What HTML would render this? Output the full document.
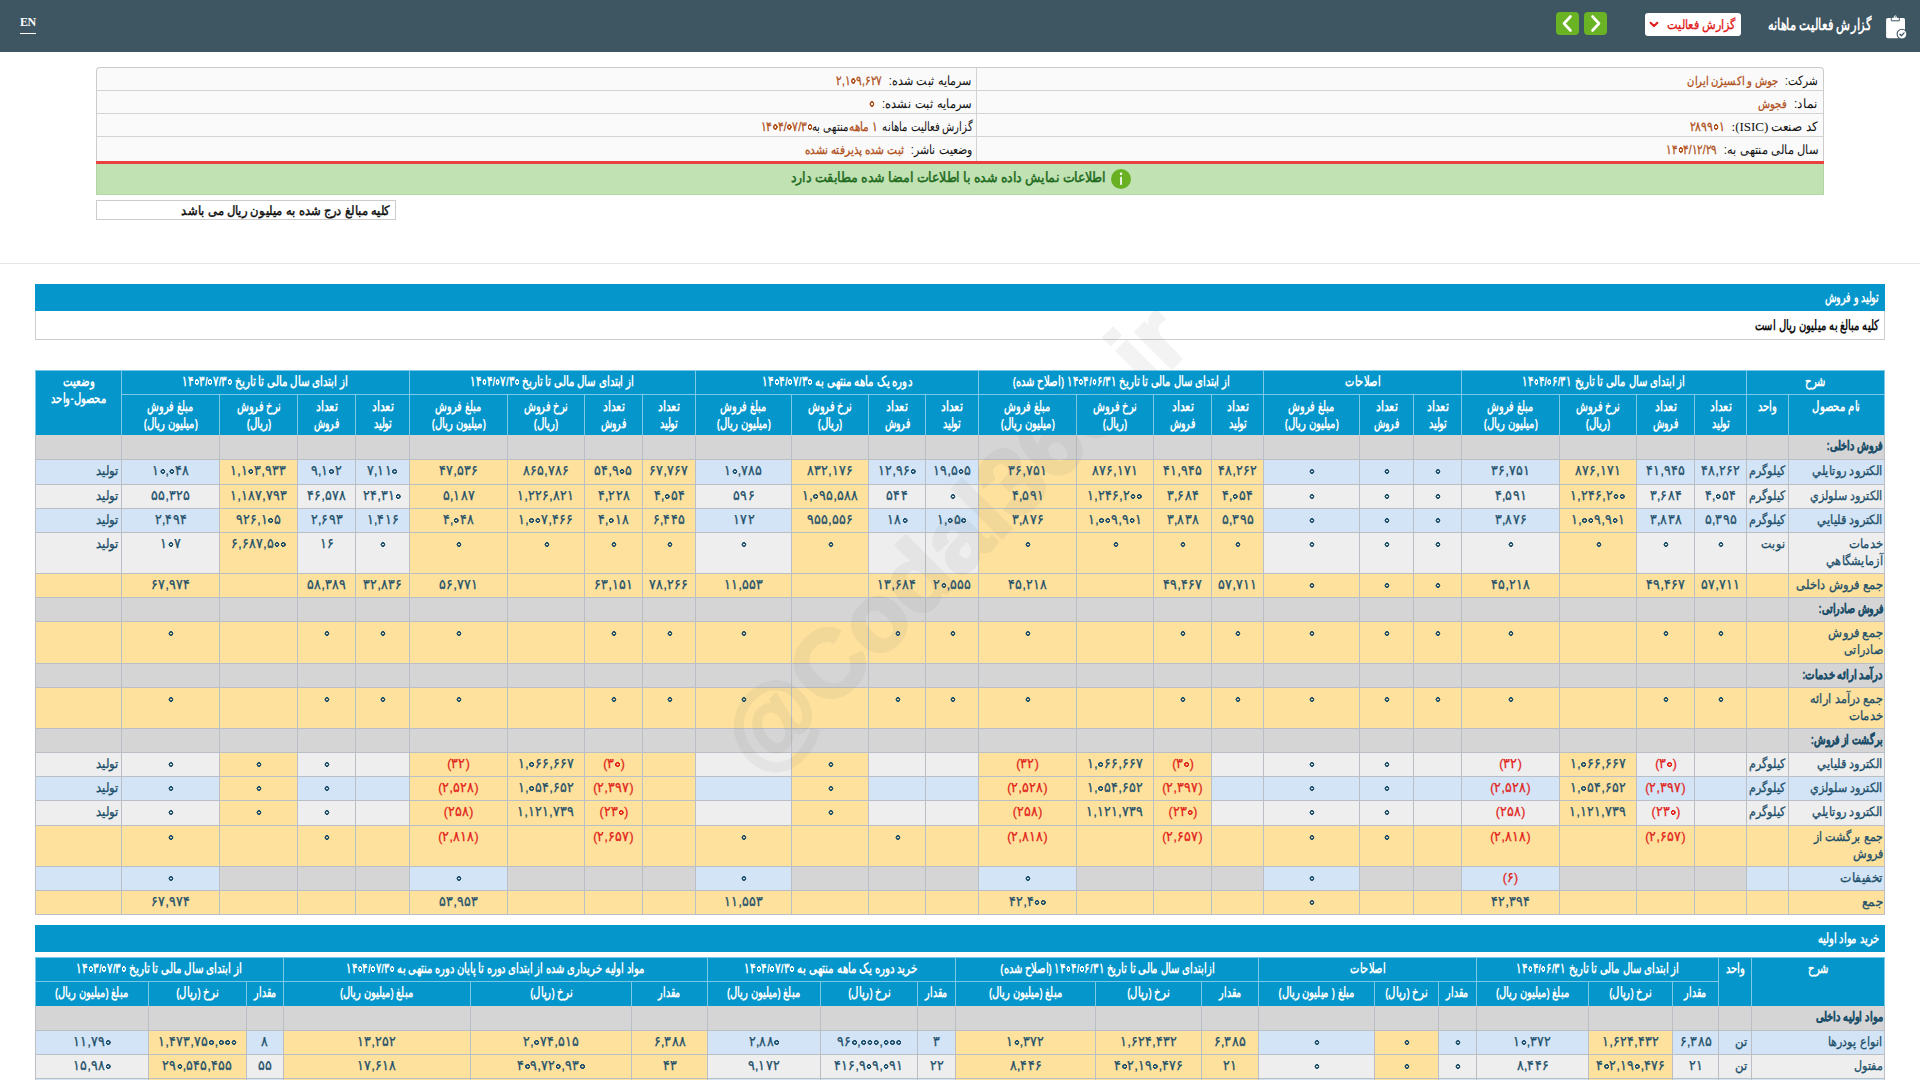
<!DOCTYPE html>
<html lang="fa"><head><meta charset="utf-8"><title>گزارش فعالیت ماهانه</title>
<style>
html,body{margin:0;padding:0;}
body{width:1920px;height:1080px;overflow:hidden;background:#fff;position:relative;font-family:"Liberation Sans",sans-serif;direction:rtl;font-size:12px;}
div{position:absolute;box-sizing:border-box;}
.c{overflow:hidden;white-space:nowrap;line-height:17px;}
.t{display:inline-block;white-space:nowrap;vertical-align:top;}
.s{font-family:"Liberation Serif",serif;}
.n{direction:ltr;}
.d{-webkit-text-stroke:0.300px;}
.z{display:inline-block;width:6px;height:5.100px;background:radial-gradient(ellipse closest-side,transparent 30%,currentColor 46%,currentColor 86%,transparent 100%);margin:0 .5px;position:relative;top:-1px;}
b,.b{font-weight:bold;}
</style></head><body>

<div style="left:0px;top:0px;width:1920px;height:52px;background:#3e5562;"></div>
<div class="s" style="left:20px;top:14px;width:20px;height:16px;color:#fff;font-size:12px;font-weight:bold;letter-spacing:-0.400px;line-height:16px;direction:ltr;text-align:left;">EN</div>
<div style="left:20px;top:33px;width:16px;height:1px;background:#fff;"></div>
<svg style="position:absolute;left:1884px;top:14px" width="26" height="28" viewBox="0 0 26 28">
<rect x="2.100" y="3.900" width="18.900" height="20.300" rx="1.700" fill="#fff"/>
<path d="M7.300 6.800V4.300c0-.5.400-.9.900-.9h1.200c.2-1.400 1-2.400 1.900-2.400s1.700 1 1.900 2.400h1.200c.5 0 .9.400.9.900v2.500z" fill="#fff" stroke="#3e5562" stroke-width="1"/>
<path d="M11.300 1.900l.9 1.400h-1.800z" fill="#3e5562"/>
<circle cx="18" cy="20.100" r="4.900" fill="#fff" stroke="#3e5562" stroke-width="1.100"/>
<path d="M15.900 20.300l1.500 1.500 2.700-2.900" fill="none" stroke="#3e5562" stroke-width="1.300" stroke-linecap="round" stroke-linejoin="round"/>
</svg>
<div style="left:1700px;top:13px;width:172px;height:24px;color:#fff;line-height:24px;text-align:right;white-space:nowrap"><span class="t" style="font-size:15.5px;font-weight:bold;transform:scaleX(0.719);transform-origin:right;margin-left:-47.0px;">گزارش فعالیت ماهانه</span></div>
<div style="left:1645px;top:13px;width:96px;height:23px;background:#fff;border-radius:3px;"></div>
<div style="left:1660px;top:13.500px;width:76px;height:21px;color:#e01818;line-height:21px;text-align:right;white-space:nowrap;-webkit-text-stroke:0.300px"><span class="t" style="font-size:13px;transform:scaleX(0.863);transform-origin:right;margin-left:-11.0px;">گزارش فعالیت</span></div>
<svg style="position:absolute;left:1649px;top:21px" width="10" height="8" viewBox="0 0 10 8"><path d="M1.600 1.700L5 5 8.400 1.700" fill="none" stroke="#e01818" stroke-width="2" stroke-linecap="round" stroke-linejoin="round"/></svg>
<div style="left:1556px;top:12px;width:23px;height:23px;background:#69b325;border-radius:4px;"></div>
<div style="left:1584px;top:12px;width:23px;height:23px;background:#69b325;border-radius:4px;"></div>
<svg style="position:absolute;left:1556px;top:12px" width="23" height="23" viewBox="0 0 23 23"><path d="M14.500 4.500L8 11.500l6.500 7" fill="none" stroke="#fff" stroke-width="2.600" stroke-linecap="round" stroke-linejoin="round"/></svg>
<svg style="position:absolute;left:1584px;top:12px" width="23" height="23" viewBox="0 0 23 23"><path d="M8.500 4.500l6.500 7-6.500 7" fill="none" stroke="#fff" stroke-width="2.600" stroke-linecap="round" stroke-linejoin="round"/></svg>
<div style="left:96px;top:67px;width:1728px;height:94px;background:#fafafa;border:1px solid #ccc;border-bottom:none;border-radius:4px 4px 0 0;"></div>
<div style="left:97px;top:90px;width:1726px;height:1px;background:#d4d4d4;"></div>
<div style="left:97px;top:113px;width:1726px;height:1px;background:#d4d4d4;"></div>
<div style="left:97px;top:136px;width:1726px;height:1px;background:#d4d4d4;"></div>
<div style="left:976px;top:68px;width:1px;height:93px;background:#d4d4d4;"></div>
<div style="left:1218px;top:69.5px;width:600px;height:22px;line-height:22px;font-size:13px;text-align:right;white-space:nowrap"><span style="color:#111"><span class="t" style="font-size:13px;transform:scaleX(0.805);transform-origin:right;margin-left:-8.0px;">شرکت:</span></span><span class="t" style="width:7px"></span><span style="color:#b0501a;-webkit-text-stroke:0.300px"><span class="t" style="font-size:12px;transform:scaleX(0.833);transform-origin:right;margin-left:-18.0px;">جوش و اکسیژن ایران</span></span></div>
<div style="left:1218px;top:92.5px;width:600px;height:22px;line-height:22px;font-size:13px;text-align:right;white-space:nowrap"><span style="color:#111"><span class="t" style="font-size:13px;transform:scaleX(0.923);transform-origin:right;margin-left:-2.0px;">نماد:</span></span><span class="t" style="width:7px"></span><span style="color:#b0501a;-webkit-text-stroke:0.300px"><span class="t" style="font-size:12px;transform:scaleX(0.829);transform-origin:right;margin-left:-6.0px;">فجوش</span></span></div>
<div style="left:1218px;top:115.5px;width:600px;height:22px;line-height:22px;font-size:13px;text-align:right;white-space:nowrap"><span style="color:#111"><span class="t" style="font-size:13px;transform:scaleX(0.922);transform-origin:right;margin-left:-4.0px;">کد صنعت</span><span class="t s" style="font-size:13px;direction:ltr;margin-right:3px">:(ISIC)</span></span><span class="t" style="width:7px"></span><span style="color:#b0501a;-webkit-text-stroke:0.300px"><span class="t n" style="font-size:13px;transform:scaleX(0.833);margin:0 -3.5px;">۲۸۹۹<i class="z"></i>۱</span></span></div>
<div style="left:1218px;top:138.5px;width:600px;height:22px;line-height:22px;font-size:13px;text-align:right;white-space:nowrap"><span style="color:#111"><span class="t" style="font-size:13px;transform:scaleX(0.881);transform-origin:right;margin-left:-13.0px;">سال مالی منتهی به:</span></span><span class="t" style="width:7px"></span><span style="color:#b0501a;-webkit-text-stroke:0.300px"><span class="t n" style="font-size:13px;transform:scaleX(0.797);margin:0 -6.5px;">۱۴<i class="z"></i>۴/۱۲/۲۹</span></span></div>
<div style="left:372px;top:69.5px;width:600px;height:22px;line-height:22px;font-size:13px;text-align:right;white-space:nowrap"><span style="color:#111"><span class="t" style="font-size:13px;transform:scaleX(0.857);transform-origin:right;margin-left:-14.0px;">سرمایه ثبت شده:</span></span><span class="t" style="width:7px"></span><span style="color:#b0501a;-webkit-text-stroke:0.300px"><span class="t n" style="font-size:13px;transform:scaleX(0.807);margin:0 -5.5px;">۲,۱<i class="z"></i>۹,۶۲۷</span></span></div>
<div style="left:372px;top:92.5px;width:600px;height:22px;line-height:22px;font-size:13px;text-align:right;white-space:nowrap"><span style="color:#111"><span class="t" style="font-size:13px;transform:scaleX(0.883);transform-origin:right;margin-left:-12.0px;">سرمایه ثبت نشده:</span></span><span class="t" style="width:7px"></span><span style="color:#b0501a;-webkit-text-stroke:0.300px"><span class="t n" style="font-size:13px;transform:scaleX(0.900);margin:0 -0.3px;"><i class="z"></i></span></span></div>
<div style="left:372px;top:115.5px;width:600px;height:22px;line-height:22px;font-size:13px;text-align:right;white-space:nowrap"><span style="color:#111"><span class="t" style="font-size:13px;transform:scaleX(0.774);transform-origin:right;margin-left:-26.5px;">گزارش فعالیت ماهانه</span></span><span class="t" style="width:5px"></span><span style="color:#b0501a;-webkit-text-stroke:0.300px"><span class="t" style="font-size:12.5px;transform:scaleX(0.806);transform-origin:right;margin-left:-7.0px;">۱ ماهه</span></span><span style="color:#111"><span class="t" style="font-size:13px;transform:scaleX(0.787);transform-origin:right;margin-left:-10.0px;">منتهی به</span></span><span style="color:#b0501a;-webkit-text-stroke:0.300px"><span class="t n" style="font-size:13px;transform:scaleX(0.823);margin:0 -5.6px;">۱۴<i class="z"></i>۴/<i class="z"></i>۷/۳<i class="z"></i></span></span></div>
<div style="left:372px;top:138.5px;width:600px;height:22px;line-height:22px;font-size:13px;text-align:right;white-space:nowrap"><span style="color:#111"><span class="t" style="font-size:13px;transform:scaleX(0.838);transform-origin:right;margin-left:-12.0px;">وضعیت ناشر:</span></span><span class="t" style="width:7px"></span><span style="color:#b0501a;-webkit-text-stroke:0.300px"><span class="t" style="font-size:12px;transform:scaleX(0.883);transform-origin:right;margin-left:-13.0px;">ثبت شده پذیرفته نشده</span></span></div>
<div style="left:96px;top:161px;width:1728px;height:3px;background:#e8413f;"></div>
<div style="left:96px;top:164px;width:1728px;height:31px;background:#c1e2b3;border:1px solid #b3d6a4;border-top:none;"></div>
<svg style="position:absolute;left:1110px;top:168px" width="22" height="22" viewBox="0 0 22 22"><circle cx="11" cy="11" r="10" fill="#6ab023"/><rect x="10.200" y="8.800" width="1.700" height="8" fill="#fff"/><circle cx="11.050" cy="5.800" r="1.200" fill="#fff"/></svg>
<div style="left:700px;top:167px;width:406px;height:22px;line-height:22px;color:#1e6b1e;-webkit-text-stroke:0.500px;text-align:right;white-space:nowrap"><span class="t" style="font-size:13.5px;transform:scaleX(0.901);transform-origin:right;margin-left:-35.0px;">اطلاعات نمایش داده شده با اطلاعات امضا شده مطابقت دارد</span></div>
<div style="left:96px;top:200px;width:300px;height:20px;background:#fff;border:1px solid #ccc;"></div>
<div style="left:100px;top:202px;width:290px;height:18px;line-height:18px;color:#111;-webkit-text-stroke:0.450px;text-align:right;white-space:nowrap"><span class="t" style="font-size:12.5px;transform:scaleX(0.891);transform-origin:right;margin-left:-26.0px;">کلیه مبالغ درج شده به میلیون ریال می باشد</span></div>
<div style="left:0px;top:263px;width:1920px;height:1px;background:#e6e6e6;"></div>
<div style="left:35px;top:284px;width:1850px;height:27px;background:#0597cc;z-index:2;"></div>
<div style="left:500px;top:286px;width:1379px;height:22px;line-height:22px;z-index:3;font-weight:bold;color:#fff;text-align:right;white-space:nowrap"><span class="t" style="font-size:14px;font-weight:bold;transform:scaleX(0.677);transform-origin:right;margin-left:-31.0px;">تولید و فروش</span></div>
<div style="left:35px;top:311px;width:1850px;height:29px;background:#fff;border:1px solid #ccc;border-top:none;"></div>
<div style="left:500px;top:314px;width:1379px;height:22px;line-height:22px;font-size:12px;font-weight:bold;color:#111;text-align:right;white-space:nowrap"><span class="t" style="font-size:14px;font-weight:bold;transform:scaleX(0.712);transform-origin:right;margin-left:-60.0px;">کلیه مبالغ به میلیون ریال است</span></div>
<div style="left:35px;top:370px;width:1850px;height:65px;background:#7ac8e6;"></div>
<div class="c" style="left:1747px;top:371px;width:137px;height:23px;background:#0597cc;color:#fff;text-align:center;font-weight:bold;padding-top:1.5px;line-height:17.300px;z-index:2;"><span class="t" style="font-size:13.5px;font-weight:bold;transform:scaleX(0.712);margin:0 -4.7px;">شرح</span></div>
<div class="c" style="left:1789px;top:395px;width:95px;height:40px;background:#0597cc;color:#fff;text-align:center;font-weight:bold;padding-top:2.5px;line-height:17.300px;z-index:2;"><span class="t" style="font-size:13.5px;font-weight:bold;transform:scaleX(0.718);margin:0 -11.0px;">نام محصول</span></div>
<div class="c" style="left:1747px;top:395px;width:41px;height:40px;background:#0597cc;color:#fff;text-align:center;font-weight:bold;padding-top:2.5px;line-height:17.300px;z-index:2;"><span class="t" style="font-size:13.5px;font-weight:bold;transform:scaleX(0.719);margin:0 -4.5px;">واحد</span></div>
<div class="c" style="left:1462px;top:371px;width:284px;height:23px;background:#0597cc;color:#fff;text-align:center;font-weight:bold;padding-top:1.5px;line-height:17.300px;z-index:2;"><span class="t" style="font-size:13.5px;font-weight:bold;transform:scaleX(0.718);margin:0 -37.5px;">از ابتدای سال مالی تا تاریخ <span class="t n">۱۴<i class="z"></i>۴/<i class="z"></i>۶/۳۱</span></span></div>
<div class="c" style="left:1695px;top:395px;width:51px;height:40px;background:#0597cc;color:#fff;text-align:center;font-weight:bold;padding-top:2.5px;line-height:17.300px;z-index:2;"><span class="t" style="font-size:13.5px;font-weight:bold;transform:scaleX(0.773);margin:0 -3.8px;">تعداد</span><br><span class="t" style="font-size:13.5px;font-weight:bold;transform:scaleX(0.697);margin:0 -5.0px;">تولید</span></div>
<div class="c" style="left:1637px;top:395px;width:57px;height:40px;background:#0597cc;color:#fff;text-align:center;font-weight:bold;padding-top:2.5px;line-height:17.300px;z-index:2;"><span class="t" style="font-size:13.5px;font-weight:bold;transform:scaleX(0.773);margin:0 -3.8px;">تعداد</span><br><span class="t" style="font-size:13.5px;font-weight:bold;transform:scaleX(0.663);margin:0 -7.8px;">فروش</span></div>
<div class="c" style="left:1560px;top:395px;width:76px;height:40px;background:#0597cc;color:#fff;text-align:center;font-weight:bold;padding-top:2.5px;line-height:17.300px;z-index:2;"><span class="t" style="font-size:13.5px;font-weight:bold;transform:scaleX(0.696);margin:0 -11.2px;">نرخ فروش</span><br><span class="t" style="font-size:13.5px;font-weight:bold;transform:scaleX(0.725);margin:0 -5.5px;">(ریال)</span></div>
<div class="c" style="left:1462px;top:395px;width:97px;height:40px;background:#0597cc;color:#fff;text-align:center;font-weight:bold;padding-top:2.5px;line-height:17.300px;z-index:2;"><span class="t" style="font-size:13.5px;font-weight:bold;transform:scaleX(0.691);margin:0 -12.5px;">مبلغ فروش</span><br><span class="t" style="font-size:13.5px;font-weight:bold;transform:scaleX(0.717);margin:0 -13.0px;">(میلیون ریال)</span></div>
<div class="c" style="left:1264px;top:371px;width:197px;height:23px;background:#0597cc;color:#fff;text-align:center;font-weight:bold;padding-top:1.5px;line-height:17.300px;z-index:2;"><span class="t" style="font-size:13.5px;font-weight:bold;transform:scaleX(0.703);margin:0 -8.8px;">اصلاحات</span></div>
<div class="c" style="left:1414px;top:395px;width:47px;height:40px;background:#0597cc;color:#fff;text-align:center;font-weight:bold;padding-top:2.5px;line-height:17.300px;z-index:2;"><span class="t" style="font-size:13.5px;font-weight:bold;transform:scaleX(0.773);margin:0 -3.8px;">تعداد</span><br><span class="t" style="font-size:13.5px;font-weight:bold;transform:scaleX(0.697);margin:0 -5.0px;">تولید</span></div>
<div class="c" style="left:1360px;top:395px;width:53px;height:40px;background:#0597cc;color:#fff;text-align:center;font-weight:bold;padding-top:2.5px;line-height:17.300px;z-index:2;"><span class="t" style="font-size:13.5px;font-weight:bold;transform:scaleX(0.773);margin:0 -3.8px;">تعداد</span><br><span class="t" style="font-size:13.5px;font-weight:bold;transform:scaleX(0.663);margin:0 -7.8px;">فروش</span></div>
<div class="c" style="left:1264px;top:395px;width:95px;height:40px;background:#0597cc;color:#fff;text-align:center;font-weight:bold;padding-top:2.5px;line-height:17.300px;z-index:2;"><span class="t" style="font-size:13.5px;font-weight:bold;transform:scaleX(0.691);margin:0 -12.5px;">مبلغ فروش</span><br><span class="t" style="font-size:13.5px;font-weight:bold;transform:scaleX(0.717);margin:0 -13.0px;">(میلیون ریال)</span></div>
<div class="c" style="left:979px;top:371px;width:284px;height:23px;background:#0597cc;color:#fff;text-align:center;font-weight:bold;padding-top:1.5px;line-height:17.300px;z-index:2;"><span class="t" style="font-size:13.5px;font-weight:bold;transform:scaleX(0.718);margin:0 -50.0px;">از ابتدای سال مالی تا تاریخ <span class="t n">۱۴<i class="z"></i>۴/<i class="z"></i>۶/۳۱</span> (اصلاح شده)</span></div>
<div class="c" style="left:1212px;top:395px;width:51px;height:40px;background:#0597cc;color:#fff;text-align:center;font-weight:bold;padding-top:2.5px;line-height:17.300px;z-index:2;"><span class="t" style="font-size:13.5px;font-weight:bold;transform:scaleX(0.773);margin:0 -3.8px;">تعداد</span><br><span class="t" style="font-size:13.5px;font-weight:bold;transform:scaleX(0.697);margin:0 -5.0px;">تولید</span></div>
<div class="c" style="left:1154px;top:395px;width:57px;height:40px;background:#0597cc;color:#fff;text-align:center;font-weight:bold;padding-top:2.5px;line-height:17.300px;z-index:2;"><span class="t" style="font-size:13.5px;font-weight:bold;transform:scaleX(0.773);margin:0 -3.8px;">تعداد</span><br><span class="t" style="font-size:13.5px;font-weight:bold;transform:scaleX(0.663);margin:0 -7.8px;">فروش</span></div>
<div class="c" style="left:1077px;top:395px;width:76px;height:40px;background:#0597cc;color:#fff;text-align:center;font-weight:bold;padding-top:2.5px;line-height:17.300px;z-index:2;"><span class="t" style="font-size:13.5px;font-weight:bold;transform:scaleX(0.696);margin:0 -11.2px;">نرخ فروش</span><br><span class="t" style="font-size:13.5px;font-weight:bold;transform:scaleX(0.725);margin:0 -5.5px;">(ریال)</span></div>
<div class="c" style="left:979px;top:395px;width:97px;height:40px;background:#0597cc;color:#fff;text-align:center;font-weight:bold;padding-top:2.5px;line-height:17.300px;z-index:2;"><span class="t" style="font-size:13.5px;font-weight:bold;transform:scaleX(0.691);margin:0 -12.5px;">مبلغ فروش</span><br><span class="t" style="font-size:13.5px;font-weight:bold;transform:scaleX(0.717);margin:0 -13.0px;">(میلیون ریال)</span></div>
<div class="c" style="left:696px;top:371px;width:282px;height:23px;background:#0597cc;color:#fff;text-align:center;font-weight:bold;padding-top:1.5px;line-height:17.300px;z-index:2;"><span class="t" style="font-size:13.5px;font-weight:bold;transform:scaleX(0.733);margin:0 -32.0px;">دوره یک ماهه منتهی به <span class="t n">۱۴<i class="z"></i>۴/<i class="z"></i>۷/۳<i class="z"></i></span></span></div>
<div class="c" style="left:926px;top:395px;width:52px;height:40px;background:#0597cc;color:#fff;text-align:center;font-weight:bold;padding-top:2.5px;line-height:17.300px;z-index:2;"><span class="t" style="font-size:13.5px;font-weight:bold;transform:scaleX(0.773);margin:0 -3.8px;">تعداد</span><br><span class="t" style="font-size:13.5px;font-weight:bold;transform:scaleX(0.697);margin:0 -5.0px;">تولید</span></div>
<div class="c" style="left:869px;top:395px;width:56px;height:40px;background:#0597cc;color:#fff;text-align:center;font-weight:bold;padding-top:2.5px;line-height:17.300px;z-index:2;"><span class="t" style="font-size:13.5px;font-weight:bold;transform:scaleX(0.773);margin:0 -3.8px;">تعداد</span><br><span class="t" style="font-size:13.5px;font-weight:bold;transform:scaleX(0.663);margin:0 -7.8px;">فروش</span></div>
<div class="c" style="left:792px;top:395px;width:76px;height:40px;background:#0597cc;color:#fff;text-align:center;font-weight:bold;padding-top:2.5px;line-height:17.300px;z-index:2;"><span class="t" style="font-size:13.5px;font-weight:bold;transform:scaleX(0.696);margin:0 -11.2px;">نرخ فروش</span><br><span class="t" style="font-size:13.5px;font-weight:bold;transform:scaleX(0.725);margin:0 -5.5px;">(ریال)</span></div>
<div class="c" style="left:696px;top:395px;width:95px;height:40px;background:#0597cc;color:#fff;text-align:center;font-weight:bold;padding-top:2.5px;line-height:17.300px;z-index:2;"><span class="t" style="font-size:13.5px;font-weight:bold;transform:scaleX(0.691);margin:0 -12.5px;">مبلغ فروش</span><br><span class="t" style="font-size:13.5px;font-weight:bold;transform:scaleX(0.717);margin:0 -13.0px;">(میلیون ریال)</span></div>
<div class="c" style="left:410px;top:371px;width:285px;height:23px;background:#0597cc;color:#fff;text-align:center;font-weight:bold;padding-top:1.5px;line-height:17.300px;z-index:2;"><span class="t" style="font-size:13.5px;font-weight:bold;transform:scaleX(0.726);margin:0 -36.5px;">از ابتدای سال مالی تا تاریخ <span class="t n">۱۴<i class="z"></i>۴/<i class="z"></i>۷/۳<i class="z"></i></span></span></div>
<div class="c" style="left:643px;top:395px;width:52px;height:40px;background:#0597cc;color:#fff;text-align:center;font-weight:bold;padding-top:2.5px;line-height:17.300px;z-index:2;"><span class="t" style="font-size:13.5px;font-weight:bold;transform:scaleX(0.773);margin:0 -3.8px;">تعداد</span><br><span class="t" style="font-size:13.5px;font-weight:bold;transform:scaleX(0.697);margin:0 -5.0px;">تولید</span></div>
<div class="c" style="left:585px;top:395px;width:57px;height:40px;background:#0597cc;color:#fff;text-align:center;font-weight:bold;padding-top:2.5px;line-height:17.300px;z-index:2;"><span class="t" style="font-size:13.5px;font-weight:bold;transform:scaleX(0.773);margin:0 -3.8px;">تعداد</span><br><span class="t" style="font-size:13.5px;font-weight:bold;transform:scaleX(0.663);margin:0 -7.8px;">فروش</span></div>
<div class="c" style="left:508px;top:395px;width:76px;height:40px;background:#0597cc;color:#fff;text-align:center;font-weight:bold;padding-top:2.5px;line-height:17.300px;z-index:2;"><span class="t" style="font-size:13.5px;font-weight:bold;transform:scaleX(0.696);margin:0 -11.2px;">نرخ فروش</span><br><span class="t" style="font-size:13.5px;font-weight:bold;transform:scaleX(0.725);margin:0 -5.5px;">(ریال)</span></div>
<div class="c" style="left:410px;top:395px;width:97px;height:40px;background:#0597cc;color:#fff;text-align:center;font-weight:bold;padding-top:2.5px;line-height:17.300px;z-index:2;"><span class="t" style="font-size:13.5px;font-weight:bold;transform:scaleX(0.691);margin:0 -12.5px;">مبلغ فروش</span><br><span class="t" style="font-size:13.5px;font-weight:bold;transform:scaleX(0.717);margin:0 -13.0px;">(میلیون ریال)</span></div>
<div class="c" style="left:122px;top:371px;width:287px;height:23px;background:#0597cc;color:#fff;text-align:center;font-weight:bold;padding-top:1.5px;line-height:17.300px;z-index:2;"><span class="t" style="font-size:13.5px;font-weight:bold;transform:scaleX(0.733);margin:0 -35.5px;">از ابتدای سال مالی تا تاریخ <span class="t n">۱۴<i class="z"></i>۳/<i class="z"></i>۷/۳<i class="z"></i></span></span></div>
<div class="c" style="left:356px;top:395px;width:53px;height:40px;background:#0597cc;color:#fff;text-align:center;font-weight:bold;padding-top:2.5px;line-height:17.300px;z-index:2;"><span class="t" style="font-size:13.5px;font-weight:bold;transform:scaleX(0.773);margin:0 -3.8px;">تعداد</span><br><span class="t" style="font-size:13.5px;font-weight:bold;transform:scaleX(0.697);margin:0 -5.0px;">تولید</span></div>
<div class="c" style="left:298px;top:395px;width:57px;height:40px;background:#0597cc;color:#fff;text-align:center;font-weight:bold;padding-top:2.5px;line-height:17.300px;z-index:2;"><span class="t" style="font-size:13.5px;font-weight:bold;transform:scaleX(0.773);margin:0 -3.8px;">تعداد</span><br><span class="t" style="font-size:13.5px;font-weight:bold;transform:scaleX(0.663);margin:0 -7.8px;">فروش</span></div>
<div class="c" style="left:220px;top:395px;width:77px;height:40px;background:#0597cc;color:#fff;text-align:center;font-weight:bold;padding-top:2.5px;line-height:17.300px;z-index:2;"><span class="t" style="font-size:13.5px;font-weight:bold;transform:scaleX(0.696);margin:0 -11.2px;">نرخ فروش</span><br><span class="t" style="font-size:13.5px;font-weight:bold;transform:scaleX(0.725);margin:0 -5.5px;">(ریال)</span></div>
<div class="c" style="left:122px;top:395px;width:97px;height:40px;background:#0597cc;color:#fff;text-align:center;font-weight:bold;padding-top:2.5px;line-height:17.300px;z-index:2;"><span class="t" style="font-size:13.5px;font-weight:bold;transform:scaleX(0.691);margin:0 -12.5px;">مبلغ فروش</span><br><span class="t" style="font-size:13.5px;font-weight:bold;transform:scaleX(0.717);margin:0 -13.0px;">(میلیون ریال)</span></div>
<div class="c" style="left:36px;top:371px;width:85px;height:64px;background:#0597cc;color:#fff;text-align:center;font-weight:bold;padding-top:1.5px;line-height:17.300px;z-index:2;"><span class="t" style="font-size:13.5px;font-weight:bold;transform:scaleX(0.721);margin:0 -7.2px;">وضعیت</span><br><span class="t" style="font-size:13.5px;font-weight:bold;transform:scaleX(0.709);margin:0 -13.2px;">محصول-واحد</span></div>
<div style="left:35px;top:435px;width:1850px;height:480px;background:#b9bfc4;"></div>
<div class="c d" style="left:1789px;top:435px;width:95px;height:24px;background:#d5d5d5;color:#1d4f6a;text-align:right;padding-right:1px;padding-top:2px;"><b><span class="t" style="font-size:13px;font-weight:bold;transform:scaleX(0.742);transform-origin:right;margin-left:-23.0px;">فروش داخلی:</span></b></div>
<div class="c d" style="left:1747px;top:435px;width:41px;height:24px;background:#d5d5d5;color:#1d4f6a;text-align:center;padding-top:2px;"></div>
<div class="c d" style="left:1695px;top:435px;width:51px;height:24px;background:#d5d5d5;color:#1d4f6a;text-align:center;padding-top:2px;"></div>
<div class="c d" style="left:1637px;top:435px;width:57px;height:24px;background:#d5d5d5;color:#1d4f6a;text-align:center;padding-top:2px;"></div>
<div class="c d" style="left:1560px;top:435px;width:76px;height:24px;background:#d5d5d5;color:#1d4f6a;text-align:center;padding-top:2px;"></div>
<div class="c d" style="left:1462px;top:435px;width:97px;height:24px;background:#d5d5d5;color:#1d4f6a;text-align:center;padding-top:2px;"></div>
<div class="c d" style="left:1414px;top:435px;width:47px;height:24px;background:#d5d5d5;color:#1d4f6a;text-align:center;padding-top:2px;"></div>
<div class="c d" style="left:1360px;top:435px;width:53px;height:24px;background:#d5d5d5;color:#1d4f6a;text-align:center;padding-top:2px;"></div>
<div class="c d" style="left:1264px;top:435px;width:95px;height:24px;background:#d5d5d5;color:#1d4f6a;text-align:center;padding-top:2px;"></div>
<div class="c d" style="left:1212px;top:435px;width:51px;height:24px;background:#d5d5d5;color:#1d4f6a;text-align:center;padding-top:2px;"></div>
<div class="c d" style="left:1154px;top:435px;width:57px;height:24px;background:#d5d5d5;color:#1d4f6a;text-align:center;padding-top:2px;"></div>
<div class="c d" style="left:1077px;top:435px;width:76px;height:24px;background:#d5d5d5;color:#1d4f6a;text-align:center;padding-top:2px;"></div>
<div class="c d" style="left:979px;top:435px;width:97px;height:24px;background:#d5d5d5;color:#1d4f6a;text-align:center;padding-top:2px;"></div>
<div class="c d" style="left:926px;top:435px;width:52px;height:24px;background:#d5d5d5;color:#1d4f6a;text-align:center;padding-top:2px;"></div>
<div class="c d" style="left:869px;top:435px;width:56px;height:24px;background:#d5d5d5;color:#1d4f6a;text-align:center;padding-top:2px;"></div>
<div class="c d" style="left:792px;top:435px;width:76px;height:24px;background:#d5d5d5;color:#1d4f6a;text-align:center;padding-top:2px;"></div>
<div class="c d" style="left:696px;top:435px;width:95px;height:24px;background:#d5d5d5;color:#1d4f6a;text-align:center;padding-top:2px;"></div>
<div class="c d" style="left:643px;top:435px;width:52px;height:24px;background:#d5d5d5;color:#1d4f6a;text-align:center;padding-top:2px;"></div>
<div class="c d" style="left:585px;top:435px;width:57px;height:24px;background:#d5d5d5;color:#1d4f6a;text-align:center;padding-top:2px;"></div>
<div class="c d" style="left:508px;top:435px;width:76px;height:24px;background:#d5d5d5;color:#1d4f6a;text-align:center;padding-top:2px;"></div>
<div class="c d" style="left:410px;top:435px;width:97px;height:24px;background:#d5d5d5;color:#1d4f6a;text-align:center;padding-top:2px;"></div>
<div class="c d" style="left:356px;top:435px;width:53px;height:24px;background:#d5d5d5;color:#1d4f6a;text-align:center;padding-top:2px;"></div>
<div class="c d" style="left:298px;top:435px;width:57px;height:24px;background:#d5d5d5;color:#1d4f6a;text-align:center;padding-top:2px;"></div>
<div class="c d" style="left:220px;top:435px;width:77px;height:24px;background:#d5d5d5;color:#1d4f6a;text-align:center;padding-top:2px;"></div>
<div class="c d" style="left:122px;top:435px;width:97px;height:24px;background:#d5d5d5;color:#1d4f6a;text-align:center;padding-top:2px;"></div>
<div class="c d" style="left:36px;top:435px;width:85px;height:24px;background:#d5d5d5;color:#1d4f6a;text-align:center;padding-top:2px;"></div>
<div class="c d" style="left:1789px;top:460px;width:95px;height:24px;background:#d2e4f5;color:#1d4f6a;text-align:right;padding-right:1px;padding-top:2px;"><span class="t" style="font-size:13px;transform:scaleX(0.877);transform-origin:right;margin-left:-10.0px;">الکترود روتايلي</span></div>
<div class="c d" style="left:1747px;top:460px;width:41px;height:24px;background:#d2e4f5;color:#1d4f6a;text-align:right;padding-right:3px;padding-top:2px;"><span class="t" style="font-size:13px;transform:scaleX(0.848);transform-origin:right;margin-left:-6.4px;">کیلوگرم</span></div>
<div class="c d" style="left:1695px;top:460px;width:51px;height:24px;background:#d2e4f5;color:#1d4f6a;text-align:center;padding-top:2px;"><span class="t n" style="font-size:13.5px;transform:scaleX(0.900);margin:0 -2.2px;">۴۸,۲۶۲</span></div>
<div class="c d" style="left:1637px;top:460px;width:57px;height:24px;background:#d2e4f5;color:#1d4f6a;text-align:center;padding-top:2px;"><span class="t n" style="font-size:13.5px;transform:scaleX(0.900);margin:0 -2.2px;">۴۱,۹۴۵</span></div>
<div class="c d" style="left:1560px;top:460px;width:76px;height:24px;background:#fde19c;color:#1d4f6a;text-align:center;padding-top:2px;"><span class="t n" style="font-size:13.5px;transform:scaleX(0.900);margin:0 -2.6px;">۸۷۶,۱۷۱</span></div>
<div class="c d" style="left:1462px;top:460px;width:97px;height:24px;background:#d2e4f5;color:#1d4f6a;text-align:center;padding-top:2px;"><span class="t n" style="font-size:13.5px;transform:scaleX(0.900);margin:0 -2.2px;">۳۶,۷۵۱</span></div>
<div class="c d" style="left:1414px;top:460px;width:47px;height:24px;background:#d2e4f5;color:#1d4f6a;text-align:center;padding-top:2px;"><span class="t n" style="font-size:13.5px;transform:scaleX(0.900);margin:0 -0.4px;"><i class="z"></i></span></div>
<div class="c d" style="left:1360px;top:460px;width:53px;height:24px;background:#d2e4f5;color:#1d4f6a;text-align:center;padding-top:2px;"><span class="t n" style="font-size:13.5px;transform:scaleX(0.900);margin:0 -0.4px;"><i class="z"></i></span></div>
<div class="c d" style="left:1264px;top:460px;width:95px;height:24px;background:#d2e4f5;color:#1d4f6a;text-align:center;padding-top:2px;"><span class="t n" style="font-size:13.5px;transform:scaleX(0.900);margin:0 -0.4px;"><i class="z"></i></span></div>
<div class="c d" style="left:1212px;top:460px;width:51px;height:24px;background:#fde19c;color:#1d4f6a;text-align:center;padding-top:2px;"><span class="t n" style="font-size:13.5px;transform:scaleX(0.900);margin:0 -2.2px;">۴۸,۲۶۲</span></div>
<div class="c d" style="left:1154px;top:460px;width:57px;height:24px;background:#fde19c;color:#1d4f6a;text-align:center;padding-top:2px;"><span class="t n" style="font-size:13.5px;transform:scaleX(0.900);margin:0 -2.2px;">۴۱,۹۴۵</span></div>
<div class="c d" style="left:1077px;top:460px;width:76px;height:24px;background:#fde19c;color:#1d4f6a;text-align:center;padding-top:2px;"><span class="t n" style="font-size:13.5px;transform:scaleX(0.900);margin:0 -2.6px;">۸۷۶,۱۷۱</span></div>
<div class="c d" style="left:979px;top:460px;width:97px;height:24px;background:#fde19c;color:#1d4f6a;text-align:center;padding-top:2px;"><span class="t n" style="font-size:13.5px;transform:scaleX(0.900);margin:0 -2.2px;">۳۶,۷۵۱</span></div>
<div class="c d" style="left:926px;top:460px;width:52px;height:24px;background:#d2e4f5;color:#1d4f6a;text-align:center;padding-top:2px;"><span class="t n" style="font-size:13.5px;transform:scaleX(0.900);margin:0 -2.2px;">۱۹,۵<i class="z"></i>۵</span></div>
<div class="c d" style="left:869px;top:460px;width:56px;height:24px;background:#d2e4f5;color:#1d4f6a;text-align:center;padding-top:2px;"><span class="t n" style="font-size:13.5px;transform:scaleX(0.900);margin:0 -2.2px;">۱۲,۹۶<i class="z"></i></span></div>
<div class="c d" style="left:792px;top:460px;width:76px;height:24px;background:#fde19c;color:#1d4f6a;text-align:center;padding-top:2px;"><span class="t n" style="font-size:13.5px;transform:scaleX(0.900);margin:0 -2.6px;">۸۳۲,۱۷۶</span></div>
<div class="c d" style="left:696px;top:460px;width:95px;height:24px;background:#d2e4f5;color:#1d4f6a;text-align:center;padding-top:2px;"><span class="t n" style="font-size:13.5px;transform:scaleX(0.900);margin:0 -2.2px;">۱<i class="z"></i>,۷۸۵</span></div>
<div class="c d" style="left:643px;top:460px;width:52px;height:24px;background:#fde19c;color:#1d4f6a;text-align:center;padding-top:2px;"><span class="t n" style="font-size:13.5px;transform:scaleX(0.900);margin:0 -2.2px;">۶۷,۷۶۷</span></div>
<div class="c d" style="left:585px;top:460px;width:57px;height:24px;background:#fde19c;color:#1d4f6a;text-align:center;padding-top:2px;"><span class="t n" style="font-size:13.5px;transform:scaleX(0.900);margin:0 -2.2px;">۵۴,۹<i class="z"></i>۵</span></div>
<div class="c d" style="left:508px;top:460px;width:76px;height:24px;background:#fde19c;color:#1d4f6a;text-align:center;padding-top:2px;"><span class="t n" style="font-size:13.5px;transform:scaleX(0.900);margin:0 -2.6px;">۸۶۵,۷۸۶</span></div>
<div class="c d" style="left:410px;top:460px;width:97px;height:24px;background:#fde19c;color:#1d4f6a;text-align:center;padding-top:2px;"><span class="t n" style="font-size:13.5px;transform:scaleX(0.900);margin:0 -2.2px;">۴۷,۵۳۶</span></div>
<div class="c d" style="left:356px;top:460px;width:53px;height:24px;background:#d2e4f5;color:#1d4f6a;text-align:center;padding-top:2px;"><span class="t n" style="font-size:13.5px;transform:scaleX(0.900);margin:0 -1.8px;">۷,۱۱<i class="z"></i></span></div>
<div class="c d" style="left:298px;top:460px;width:57px;height:24px;background:#d2e4f5;color:#1d4f6a;text-align:center;padding-top:2px;"><span class="t n" style="font-size:13.5px;transform:scaleX(0.900);margin:0 -1.8px;">۹,۱<i class="z"></i>۲</span></div>
<div class="c d" style="left:220px;top:460px;width:77px;height:24px;background:#fde19c;color:#1d4f6a;text-align:center;padding-top:2px;"><span class="t n" style="font-size:13.5px;transform:scaleX(0.900);margin:0 -3.2px;">۱,۱<i class="z"></i>۳,۹۳۳</span></div>
<div class="c d" style="left:122px;top:460px;width:97px;height:24px;background:#d2e4f5;color:#1d4f6a;text-align:center;padding-top:2px;"><span class="t n" style="font-size:13.5px;transform:scaleX(0.900);margin:0 -2.2px;">۱<i class="z"></i>,<i class="z"></i>۴۸</span></div>
<div class="c d" style="left:36px;top:460px;width:85px;height:24px;background:#d2e4f5;color:#1d4f6a;text-align:right;padding-right:2px;padding-top:2px;"><span class="t" style="font-size:13px;transform:scaleX(0.885);transform-origin:right;margin-left:-3.0px;">تولید</span></div>
<div class="c d" style="left:1789px;top:485px;width:95px;height:23px;background:#eeeeee;color:#1d4f6a;text-align:right;padding-right:1px;padding-top:2px;"><span class="t" style="font-size:13px;transform:scaleX(0.854);transform-origin:right;margin-left:-12.4px;">الکترود سلولزي</span></div>
<div class="c d" style="left:1747px;top:485px;width:41px;height:23px;background:#eeeeee;color:#1d4f6a;text-align:right;padding-right:3px;padding-top:2px;"><span class="t" style="font-size:13px;transform:scaleX(0.848);transform-origin:right;margin-left:-6.4px;">کیلوگرم</span></div>
<div class="c d" style="left:1695px;top:485px;width:51px;height:23px;background:#eeeeee;color:#1d4f6a;text-align:center;padding-top:2px;"><span class="t n" style="font-size:13.5px;transform:scaleX(0.900);margin:0 -1.8px;">۴,<i class="z"></i>۵۴</span></div>
<div class="c d" style="left:1637px;top:485px;width:57px;height:23px;background:#eeeeee;color:#1d4f6a;text-align:center;padding-top:2px;"><span class="t n" style="font-size:13.5px;transform:scaleX(0.900);margin:0 -1.8px;">۳,۶۸۴</span></div>
<div class="c d" style="left:1560px;top:485px;width:76px;height:23px;background:#fde19c;color:#1d4f6a;text-align:center;padding-top:2px;"><span class="t n" style="font-size:13.5px;transform:scaleX(0.900);margin:0 -3.2px;">۱,۲۴۶,۲<i class="z"></i><i class="z"></i></span></div>
<div class="c d" style="left:1462px;top:485px;width:97px;height:23px;background:#eeeeee;color:#1d4f6a;text-align:center;padding-top:2px;"><span class="t n" style="font-size:13.5px;transform:scaleX(0.900);margin:0 -1.8px;">۴,۵۹۱</span></div>
<div class="c d" style="left:1414px;top:485px;width:47px;height:23px;background:#eeeeee;color:#1d4f6a;text-align:center;padding-top:2px;"><span class="t n" style="font-size:13.5px;transform:scaleX(0.900);margin:0 -0.4px;"><i class="z"></i></span></div>
<div class="c d" style="left:1360px;top:485px;width:53px;height:23px;background:#eeeeee;color:#1d4f6a;text-align:center;padding-top:2px;"><span class="t n" style="font-size:13.5px;transform:scaleX(0.900);margin:0 -0.4px;"><i class="z"></i></span></div>
<div class="c d" style="left:1264px;top:485px;width:95px;height:23px;background:#eeeeee;color:#1d4f6a;text-align:center;padding-top:2px;"><span class="t n" style="font-size:13.5px;transform:scaleX(0.900);margin:0 -0.4px;"><i class="z"></i></span></div>
<div class="c d" style="left:1212px;top:485px;width:51px;height:23px;background:#fde19c;color:#1d4f6a;text-align:center;padding-top:2px;"><span class="t n" style="font-size:13.5px;transform:scaleX(0.900);margin:0 -1.8px;">۴,<i class="z"></i>۵۴</span></div>
<div class="c d" style="left:1154px;top:485px;width:57px;height:23px;background:#fde19c;color:#1d4f6a;text-align:center;padding-top:2px;"><span class="t n" style="font-size:13.5px;transform:scaleX(0.900);margin:0 -1.8px;">۳,۶۸۴</span></div>
<div class="c d" style="left:1077px;top:485px;width:76px;height:23px;background:#fde19c;color:#1d4f6a;text-align:center;padding-top:2px;"><span class="t n" style="font-size:13.5px;transform:scaleX(0.900);margin:0 -3.2px;">۱,۲۴۶,۲<i class="z"></i><i class="z"></i></span></div>
<div class="c d" style="left:979px;top:485px;width:97px;height:23px;background:#fde19c;color:#1d4f6a;text-align:center;padding-top:2px;"><span class="t n" style="font-size:13.5px;transform:scaleX(0.900);margin:0 -1.8px;">۴,۵۹۱</span></div>
<div class="c d" style="left:926px;top:485px;width:52px;height:23px;background:#eeeeee;color:#1d4f6a;text-align:center;padding-top:2px;"><span class="t n" style="font-size:13.5px;transform:scaleX(0.900);margin:0 -0.4px;"><i class="z"></i></span></div>
<div class="c d" style="left:869px;top:485px;width:56px;height:23px;background:#eeeeee;color:#1d4f6a;text-align:center;padding-top:2px;"><span class="t n" style="font-size:13.5px;transform:scaleX(0.900);margin:0 -1.2px;">۵۴۴</span></div>
<div class="c d" style="left:792px;top:485px;width:76px;height:23px;background:#fde19c;color:#1d4f6a;text-align:center;padding-top:2px;"><span class="t n" style="font-size:13.5px;transform:scaleX(0.900);margin:0 -3.2px;">۱,<i class="z"></i>۹۵,۵۸۸</span></div>
<div class="c d" style="left:696px;top:485px;width:95px;height:23px;background:#eeeeee;color:#1d4f6a;text-align:center;padding-top:2px;"><span class="t n" style="font-size:13.5px;transform:scaleX(0.900);margin:0 -1.2px;">۵۹۶</span></div>
<div class="c d" style="left:643px;top:485px;width:52px;height:23px;background:#fde19c;color:#1d4f6a;text-align:center;padding-top:2px;"><span class="t n" style="font-size:13.5px;transform:scaleX(0.900);margin:0 -1.8px;">۴,<i class="z"></i>۵۴</span></div>
<div class="c d" style="left:585px;top:485px;width:57px;height:23px;background:#fde19c;color:#1d4f6a;text-align:center;padding-top:2px;"><span class="t n" style="font-size:13.5px;transform:scaleX(0.900);margin:0 -1.8px;">۴,۲۲۸</span></div>
<div class="c d" style="left:508px;top:485px;width:76px;height:23px;background:#fde19c;color:#1d4f6a;text-align:center;padding-top:2px;"><span class="t n" style="font-size:13.5px;transform:scaleX(0.900);margin:0 -3.2px;">۱,۲۲۶,۸۲۱</span></div>
<div class="c d" style="left:410px;top:485px;width:97px;height:23px;background:#fde19c;color:#1d4f6a;text-align:center;padding-top:2px;"><span class="t n" style="font-size:13.5px;transform:scaleX(0.900);margin:0 -1.8px;">۵,۱۸۷</span></div>
<div class="c d" style="left:356px;top:485px;width:53px;height:23px;background:#eeeeee;color:#1d4f6a;text-align:center;padding-top:2px;"><span class="t n" style="font-size:13.5px;transform:scaleX(0.900);margin:0 -2.2px;">۲۴,۳۱<i class="z"></i></span></div>
<div class="c d" style="left:298px;top:485px;width:57px;height:23px;background:#eeeeee;color:#1d4f6a;text-align:center;padding-top:2px;"><span class="t n" style="font-size:13.5px;transform:scaleX(0.900);margin:0 -2.2px;">۴۶,۵۷۸</span></div>
<div class="c d" style="left:220px;top:485px;width:77px;height:23px;background:#fde19c;color:#1d4f6a;text-align:center;padding-top:2px;"><span class="t n" style="font-size:13.5px;transform:scaleX(0.900);margin:0 -3.2px;">۱,۱۸۷,۷۹۳</span></div>
<div class="c d" style="left:122px;top:485px;width:97px;height:23px;background:#eeeeee;color:#1d4f6a;text-align:center;padding-top:2px;"><span class="t n" style="font-size:13.5px;transform:scaleX(0.900);margin:0 -2.2px;">۵۵,۳۲۵</span></div>
<div class="c d" style="left:36px;top:485px;width:85px;height:23px;background:#eeeeee;color:#1d4f6a;text-align:right;padding-right:2px;padding-top:2px;"><span class="t" style="font-size:13px;transform:scaleX(0.885);transform-origin:right;margin-left:-3.0px;">تولید</span></div>
<div class="c d" style="left:1789px;top:509px;width:95px;height:23px;background:#d2e4f5;color:#1d4f6a;text-align:right;padding-right:1px;padding-top:2px;"><span class="t" style="font-size:13px;transform:scaleX(0.880);transform-origin:right;margin-left:-9.0px;">الکترود قليايي</span></div>
<div class="c d" style="left:1747px;top:509px;width:41px;height:23px;background:#d2e4f5;color:#1d4f6a;text-align:right;padding-right:3px;padding-top:2px;"><span class="t" style="font-size:13px;transform:scaleX(0.848);transform-origin:right;margin-left:-6.4px;">کیلوگرم</span></div>
<div class="c d" style="left:1695px;top:509px;width:51px;height:23px;background:#d2e4f5;color:#1d4f6a;text-align:center;padding-top:2px;"><span class="t n" style="font-size:13.5px;transform:scaleX(0.900);margin:0 -1.8px;">۵,۳۹۵</span></div>
<div class="c d" style="left:1637px;top:509px;width:57px;height:23px;background:#d2e4f5;color:#1d4f6a;text-align:center;padding-top:2px;"><span class="t n" style="font-size:13.5px;transform:scaleX(0.900);margin:0 -1.8px;">۳,۸۳۸</span></div>
<div class="c d" style="left:1560px;top:509px;width:76px;height:23px;background:#fde19c;color:#1d4f6a;text-align:center;padding-top:2px;"><span class="t n" style="font-size:13.5px;transform:scaleX(0.900);margin:0 -3.2px;">۱,<i class="z"></i><i class="z"></i>۹,۹<i class="z"></i>۱</span></div>
<div class="c d" style="left:1462px;top:509px;width:97px;height:23px;background:#d2e4f5;color:#1d4f6a;text-align:center;padding-top:2px;"><span class="t n" style="font-size:13.5px;transform:scaleX(0.900);margin:0 -1.8px;">۳,۸۷۶</span></div>
<div class="c d" style="left:1414px;top:509px;width:47px;height:23px;background:#d2e4f5;color:#1d4f6a;text-align:center;padding-top:2px;"><span class="t n" style="font-size:13.5px;transform:scaleX(0.900);margin:0 -0.4px;"><i class="z"></i></span></div>
<div class="c d" style="left:1360px;top:509px;width:53px;height:23px;background:#d2e4f5;color:#1d4f6a;text-align:center;padding-top:2px;"><span class="t n" style="font-size:13.5px;transform:scaleX(0.900);margin:0 -0.4px;"><i class="z"></i></span></div>
<div class="c d" style="left:1264px;top:509px;width:95px;height:23px;background:#d2e4f5;color:#1d4f6a;text-align:center;padding-top:2px;"><span class="t n" style="font-size:13.5px;transform:scaleX(0.900);margin:0 -0.4px;"><i class="z"></i></span></div>
<div class="c d" style="left:1212px;top:509px;width:51px;height:23px;background:#fde19c;color:#1d4f6a;text-align:center;padding-top:2px;"><span class="t n" style="font-size:13.5px;transform:scaleX(0.900);margin:0 -1.8px;">۵,۳۹۵</span></div>
<div class="c d" style="left:1154px;top:509px;width:57px;height:23px;background:#fde19c;color:#1d4f6a;text-align:center;padding-top:2px;"><span class="t n" style="font-size:13.5px;transform:scaleX(0.900);margin:0 -1.8px;">۳,۸۳۸</span></div>
<div class="c d" style="left:1077px;top:509px;width:76px;height:23px;background:#fde19c;color:#1d4f6a;text-align:center;padding-top:2px;"><span class="t n" style="font-size:13.5px;transform:scaleX(0.900);margin:0 -3.2px;">۱,<i class="z"></i><i class="z"></i>۹,۹<i class="z"></i>۱</span></div>
<div class="c d" style="left:979px;top:509px;width:97px;height:23px;background:#fde19c;color:#1d4f6a;text-align:center;padding-top:2px;"><span class="t n" style="font-size:13.5px;transform:scaleX(0.900);margin:0 -1.8px;">۳,۸۷۶</span></div>
<div class="c d" style="left:926px;top:509px;width:52px;height:23px;background:#d2e4f5;color:#1d4f6a;text-align:center;padding-top:2px;"><span class="t n" style="font-size:13.5px;transform:scaleX(0.900);margin:0 -1.8px;">۱,<i class="z"></i>۵<i class="z"></i></span></div>
<div class="c d" style="left:869px;top:509px;width:56px;height:23px;background:#d2e4f5;color:#1d4f6a;text-align:center;padding-top:2px;"><span class="t n" style="font-size:13.5px;transform:scaleX(0.900);margin:0 -1.2px;">۱۸<i class="z"></i></span></div>
<div class="c d" style="left:792px;top:509px;width:76px;height:23px;background:#fde19c;color:#1d4f6a;text-align:center;padding-top:2px;"><span class="t n" style="font-size:13.5px;transform:scaleX(0.900);margin:0 -2.6px;">۹۵۵,۵۵۶</span></div>
<div class="c d" style="left:696px;top:509px;width:95px;height:23px;background:#d2e4f5;color:#1d4f6a;text-align:center;padding-top:2px;"><span class="t n" style="font-size:13.5px;transform:scaleX(0.900);margin:0 -1.2px;">۱۷۲</span></div>
<div class="c d" style="left:643px;top:509px;width:52px;height:23px;background:#fde19c;color:#1d4f6a;text-align:center;padding-top:2px;"><span class="t n" style="font-size:13.5px;transform:scaleX(0.900);margin:0 -1.8px;">۶,۴۴۵</span></div>
<div class="c d" style="left:585px;top:509px;width:57px;height:23px;background:#fde19c;color:#1d4f6a;text-align:center;padding-top:2px;"><span class="t n" style="font-size:13.5px;transform:scaleX(0.900);margin:0 -1.8px;">۴,<i class="z"></i>۱۸</span></div>
<div class="c d" style="left:508px;top:509px;width:76px;height:23px;background:#fde19c;color:#1d4f6a;text-align:center;padding-top:2px;"><span class="t n" style="font-size:13.5px;transform:scaleX(0.900);margin:0 -3.2px;">۱,<i class="z"></i><i class="z"></i>۷,۴۶۶</span></div>
<div class="c d" style="left:410px;top:509px;width:97px;height:23px;background:#fde19c;color:#1d4f6a;text-align:center;padding-top:2px;"><span class="t n" style="font-size:13.5px;transform:scaleX(0.900);margin:0 -1.8px;">۴,<i class="z"></i>۴۸</span></div>
<div class="c d" style="left:356px;top:509px;width:53px;height:23px;background:#d2e4f5;color:#1d4f6a;text-align:center;padding-top:2px;"><span class="t n" style="font-size:13.5px;transform:scaleX(0.900);margin:0 -1.8px;">۱,۴۱۶</span></div>
<div class="c d" style="left:298px;top:509px;width:57px;height:23px;background:#d2e4f5;color:#1d4f6a;text-align:center;padding-top:2px;"><span class="t n" style="font-size:13.5px;transform:scaleX(0.900);margin:0 -1.8px;">۲,۶۹۳</span></div>
<div class="c d" style="left:220px;top:509px;width:77px;height:23px;background:#fde19c;color:#1d4f6a;text-align:center;padding-top:2px;"><span class="t n" style="font-size:13.5px;transform:scaleX(0.900);margin:0 -2.6px;">۹۲۶,۱<i class="z"></i>۵</span></div>
<div class="c d" style="left:122px;top:509px;width:97px;height:23px;background:#d2e4f5;color:#1d4f6a;text-align:center;padding-top:2px;"><span class="t n" style="font-size:13.5px;transform:scaleX(0.900);margin:0 -1.8px;">۲,۴۹۴</span></div>
<div class="c d" style="left:36px;top:509px;width:85px;height:23px;background:#d2e4f5;color:#1d4f6a;text-align:right;padding-right:2px;padding-top:2px;"><span class="t" style="font-size:13px;transform:scaleX(0.885);transform-origin:right;margin-left:-3.0px;">تولید</span></div>
<div class="c d" style="left:1789px;top:533px;width:95px;height:40px;background:#eeeeee;color:#1d4f6a;text-align:right;padding-right:1px;padding-top:2px;"><span class="t" style="font-size:13px;transform:scaleX(0.895);transform-origin:right;margin-left:-4.0px;">خدمات</span><br><span class="t" style="font-size:13px;transform:scaleX(0.864);transform-origin:right;margin-left:-9.0px;">آزمايشگاهي</span></div>
<div class="c d" style="left:1747px;top:533px;width:41px;height:40px;background:#eeeeee;color:#1d4f6a;text-align:right;padding-right:3px;padding-top:2px;"><span class="t" style="font-size:13px;transform:scaleX(0.843);transform-origin:right;margin-left:-4.4px;">نوبت</span></div>
<div class="c d" style="left:1695px;top:533px;width:51px;height:40px;background:#eeeeee;color:#1d4f6a;text-align:center;padding-top:2px;"><span class="t n" style="font-size:13.5px;transform:scaleX(0.900);margin:0 -0.4px;"><i class="z"></i></span></div>
<div class="c d" style="left:1637px;top:533px;width:57px;height:40px;background:#eeeeee;color:#1d4f6a;text-align:center;padding-top:2px;"><span class="t n" style="font-size:13.5px;transform:scaleX(0.900);margin:0 -0.4px;"><i class="z"></i></span></div>
<div class="c d" style="left:1560px;top:533px;width:76px;height:40px;background:#fde19c;color:#1d4f6a;text-align:center;padding-top:2px;"><span class="t n" style="font-size:13.5px;transform:scaleX(0.900);margin:0 -0.4px;"><i class="z"></i></span></div>
<div class="c d" style="left:1462px;top:533px;width:97px;height:40px;background:#eeeeee;color:#1d4f6a;text-align:center;padding-top:2px;"><span class="t n" style="font-size:13.5px;transform:scaleX(0.900);margin:0 -0.4px;"><i class="z"></i></span></div>
<div class="c d" style="left:1414px;top:533px;width:47px;height:40px;background:#eeeeee;color:#1d4f6a;text-align:center;padding-top:2px;"><span class="t n" style="font-size:13.5px;transform:scaleX(0.900);margin:0 -0.4px;"><i class="z"></i></span></div>
<div class="c d" style="left:1360px;top:533px;width:53px;height:40px;background:#eeeeee;color:#1d4f6a;text-align:center;padding-top:2px;"><span class="t n" style="font-size:13.5px;transform:scaleX(0.900);margin:0 -0.4px;"><i class="z"></i></span></div>
<div class="c d" style="left:1264px;top:533px;width:95px;height:40px;background:#eeeeee;color:#1d4f6a;text-align:center;padding-top:2px;"><span class="t n" style="font-size:13.5px;transform:scaleX(0.900);margin:0 -0.4px;"><i class="z"></i></span></div>
<div class="c d" style="left:1212px;top:533px;width:51px;height:40px;background:#fde19c;color:#1d4f6a;text-align:center;padding-top:2px;"><span class="t n" style="font-size:13.5px;transform:scaleX(0.900);margin:0 -0.4px;"><i class="z"></i></span></div>
<div class="c d" style="left:1154px;top:533px;width:57px;height:40px;background:#fde19c;color:#1d4f6a;text-align:center;padding-top:2px;"><span class="t n" style="font-size:13.5px;transform:scaleX(0.900);margin:0 -0.4px;"><i class="z"></i></span></div>
<div class="c d" style="left:1077px;top:533px;width:76px;height:40px;background:#fde19c;color:#1d4f6a;text-align:center;padding-top:2px;"><span class="t n" style="font-size:13.5px;transform:scaleX(0.900);margin:0 -0.4px;"><i class="z"></i></span></div>
<div class="c d" style="left:979px;top:533px;width:97px;height:40px;background:#fde19c;color:#1d4f6a;text-align:center;padding-top:2px;"><span class="t n" style="font-size:13.5px;transform:scaleX(0.900);margin:0 -0.4px;"><i class="z"></i></span></div>
<div class="c d" style="left:926px;top:533px;width:52px;height:40px;background:#eeeeee;color:#1d4f6a;text-align:center;padding-top:2px;"></div>
<div class="c d" style="left:869px;top:533px;width:56px;height:40px;background:#eeeeee;color:#1d4f6a;text-align:center;padding-top:2px;"></div>
<div class="c d" style="left:792px;top:533px;width:76px;height:40px;background:#fde19c;color:#1d4f6a;text-align:center;padding-top:2px;"><span class="t n" style="font-size:13.5px;transform:scaleX(0.900);margin:0 -0.4px;"><i class="z"></i></span></div>
<div class="c d" style="left:696px;top:533px;width:95px;height:40px;background:#eeeeee;color:#1d4f6a;text-align:center;padding-top:2px;"><span class="t n" style="font-size:13.5px;transform:scaleX(0.900);margin:0 -0.4px;"><i class="z"></i></span></div>
<div class="c d" style="left:643px;top:533px;width:52px;height:40px;background:#fde19c;color:#1d4f6a;text-align:center;padding-top:2px;"><span class="t n" style="font-size:13.5px;transform:scaleX(0.900);margin:0 -0.4px;"><i class="z"></i></span></div>
<div class="c d" style="left:585px;top:533px;width:57px;height:40px;background:#fde19c;color:#1d4f6a;text-align:center;padding-top:2px;"><span class="t n" style="font-size:13.5px;transform:scaleX(0.900);margin:0 -0.4px;"><i class="z"></i></span></div>
<div class="c d" style="left:508px;top:533px;width:76px;height:40px;background:#fde19c;color:#1d4f6a;text-align:center;padding-top:2px;"><span class="t n" style="font-size:13.5px;transform:scaleX(0.900);margin:0 -0.4px;"><i class="z"></i></span></div>
<div class="c d" style="left:410px;top:533px;width:97px;height:40px;background:#fde19c;color:#1d4f6a;text-align:center;padding-top:2px;"><span class="t n" style="font-size:13.5px;transform:scaleX(0.900);margin:0 -0.4px;"><i class="z"></i></span></div>
<div class="c d" style="left:356px;top:533px;width:53px;height:40px;background:#eeeeee;color:#1d4f6a;text-align:center;padding-top:2px;"><span class="t n" style="font-size:13.5px;transform:scaleX(0.900);margin:0 -0.4px;"><i class="z"></i></span></div>
<div class="c d" style="left:298px;top:533px;width:57px;height:40px;background:#eeeeee;color:#1d4f6a;text-align:center;padding-top:2px;"><span class="t n" style="font-size:13.5px;transform:scaleX(0.900);margin:0 -0.8px;">۱۶</span></div>
<div class="c d" style="left:220px;top:533px;width:77px;height:40px;background:#fde19c;color:#1d4f6a;text-align:center;padding-top:2px;"><span class="t n" style="font-size:13.5px;transform:scaleX(0.900);margin:0 -3.2px;">۶,۶۸۷,۵<i class="z"></i><i class="z"></i></span></div>
<div class="c d" style="left:122px;top:533px;width:97px;height:40px;background:#eeeeee;color:#1d4f6a;text-align:center;padding-top:2px;"><span class="t n" style="font-size:13.5px;transform:scaleX(0.900);margin:0 -1.2px;">۱<i class="z"></i>۷</span></div>
<div class="c d" style="left:36px;top:533px;width:85px;height:40px;background:#eeeeee;color:#1d4f6a;text-align:right;padding-right:2px;padding-top:2px;"><span class="t" style="font-size:13px;transform:scaleX(0.885);transform-origin:right;margin-left:-3.0px;">تولید</span></div>
<div class="c d" style="left:1789px;top:574px;width:95px;height:23px;background:#fde19c;color:#1d4f6a;text-align:right;padding-right:1px;padding-top:2px;"><span class="t" style="font-size:13px;transform:scaleX(0.884);transform-origin:right;margin-left:-11.5px;">جمع فروش داخلی</span></div>
<div class="c d" style="left:1747px;top:574px;width:41px;height:23px;background:#fde19c;color:#1d4f6a;text-align:right;padding-right:3px;padding-top:2px;"></div>
<div class="c d" style="left:1695px;top:574px;width:51px;height:23px;background:#fde19c;color:#1d4f6a;text-align:center;padding-top:2px;"><span class="t n" style="font-size:13.5px;transform:scaleX(0.900);margin:0 -2.2px;">۵۷,۷۱۱</span></div>
<div class="c d" style="left:1637px;top:574px;width:57px;height:23px;background:#fde19c;color:#1d4f6a;text-align:center;padding-top:2px;"><span class="t n" style="font-size:13.5px;transform:scaleX(0.900);margin:0 -2.2px;">۴۹,۴۶۷</span></div>
<div class="c d" style="left:1560px;top:574px;width:76px;height:23px;background:#fde19c;color:#1d4f6a;text-align:center;padding-top:2px;"></div>
<div class="c d" style="left:1462px;top:574px;width:97px;height:23px;background:#fde19c;color:#1d4f6a;text-align:center;padding-top:2px;"><span class="t n" style="font-size:13.5px;transform:scaleX(0.900);margin:0 -2.2px;">۴۵,۲۱۸</span></div>
<div class="c d" style="left:1414px;top:574px;width:47px;height:23px;background:#fde19c;color:#1d4f6a;text-align:center;padding-top:2px;"><span class="t n" style="font-size:13.5px;transform:scaleX(0.900);margin:0 -0.4px;"><i class="z"></i></span></div>
<div class="c d" style="left:1360px;top:574px;width:53px;height:23px;background:#fde19c;color:#1d4f6a;text-align:center;padding-top:2px;"><span class="t n" style="font-size:13.5px;transform:scaleX(0.900);margin:0 -0.4px;"><i class="z"></i></span></div>
<div class="c d" style="left:1264px;top:574px;width:95px;height:23px;background:#fde19c;color:#1d4f6a;text-align:center;padding-top:2px;"><span class="t n" style="font-size:13.5px;transform:scaleX(0.900);margin:0 -0.4px;"><i class="z"></i></span></div>
<div class="c d" style="left:1212px;top:574px;width:51px;height:23px;background:#fde19c;color:#1d4f6a;text-align:center;padding-top:2px;"><span class="t n" style="font-size:13.5px;transform:scaleX(0.900);margin:0 -2.2px;">۵۷,۷۱۱</span></div>
<div class="c d" style="left:1154px;top:574px;width:57px;height:23px;background:#fde19c;color:#1d4f6a;text-align:center;padding-top:2px;"><span class="t n" style="font-size:13.5px;transform:scaleX(0.900);margin:0 -2.2px;">۴۹,۴۶۷</span></div>
<div class="c d" style="left:1077px;top:574px;width:76px;height:23px;background:#fde19c;color:#1d4f6a;text-align:center;padding-top:2px;"></div>
<div class="c d" style="left:979px;top:574px;width:97px;height:23px;background:#fde19c;color:#1d4f6a;text-align:center;padding-top:2px;"><span class="t n" style="font-size:13.5px;transform:scaleX(0.900);margin:0 -2.2px;">۴۵,۲۱۸</span></div>
<div class="c d" style="left:926px;top:574px;width:52px;height:23px;background:#fde19c;color:#1d4f6a;text-align:center;padding-top:2px;"><span class="t n" style="font-size:13.5px;transform:scaleX(0.900);margin:0 -2.2px;">۲<i class="z"></i>,۵۵۵</span></div>
<div class="c d" style="left:869px;top:574px;width:56px;height:23px;background:#fde19c;color:#1d4f6a;text-align:center;padding-top:2px;"><span class="t n" style="font-size:13.5px;transform:scaleX(0.900);margin:0 -2.2px;">۱۳,۶۸۴</span></div>
<div class="c d" style="left:792px;top:574px;width:76px;height:23px;background:#fde19c;color:#1d4f6a;text-align:center;padding-top:2px;"></div>
<div class="c d" style="left:696px;top:574px;width:95px;height:23px;background:#fde19c;color:#1d4f6a;text-align:center;padding-top:2px;"><span class="t n" style="font-size:13.5px;transform:scaleX(0.900);margin:0 -2.2px;">۱۱,۵۵۳</span></div>
<div class="c d" style="left:643px;top:574px;width:52px;height:23px;background:#fde19c;color:#1d4f6a;text-align:center;padding-top:2px;"><span class="t n" style="font-size:13.5px;transform:scaleX(0.900);margin:0 -2.2px;">۷۸,۲۶۶</span></div>
<div class="c d" style="left:585px;top:574px;width:57px;height:23px;background:#fde19c;color:#1d4f6a;text-align:center;padding-top:2px;"><span class="t n" style="font-size:13.5px;transform:scaleX(0.900);margin:0 -2.2px;">۶۳,۱۵۱</span></div>
<div class="c d" style="left:508px;top:574px;width:76px;height:23px;background:#fde19c;color:#1d4f6a;text-align:center;padding-top:2px;"></div>
<div class="c d" style="left:410px;top:574px;width:97px;height:23px;background:#fde19c;color:#1d4f6a;text-align:center;padding-top:2px;"><span class="t n" style="font-size:13.5px;transform:scaleX(0.900);margin:0 -2.2px;">۵۶,۷۷۱</span></div>
<div class="c d" style="left:356px;top:574px;width:53px;height:23px;background:#fde19c;color:#1d4f6a;text-align:center;padding-top:2px;"><span class="t n" style="font-size:13.5px;transform:scaleX(0.900);margin:0 -2.2px;">۳۲,۸۳۶</span></div>
<div class="c d" style="left:298px;top:574px;width:57px;height:23px;background:#fde19c;color:#1d4f6a;text-align:center;padding-top:2px;"><span class="t n" style="font-size:13.5px;transform:scaleX(0.900);margin:0 -2.2px;">۵۸,۳۸۹</span></div>
<div class="c d" style="left:220px;top:574px;width:77px;height:23px;background:#fde19c;color:#1d4f6a;text-align:center;padding-top:2px;"></div>
<div class="c d" style="left:122px;top:574px;width:97px;height:23px;background:#fde19c;color:#1d4f6a;text-align:center;padding-top:2px;"><span class="t n" style="font-size:13.5px;transform:scaleX(0.900);margin:0 -2.2px;">۶۷,۹۷۴</span></div>
<div class="c d" style="left:36px;top:574px;width:85px;height:23px;background:#fde19c;color:#1d4f6a;text-align:right;padding-right:2px;padding-top:2px;"></div>
<div class="c d" style="left:1789px;top:598px;width:95px;height:23px;background:#d5d5d5;color:#1d4f6a;text-align:right;padding-right:1px;padding-top:2px;"><b><span class="t" style="font-size:13px;font-weight:bold;transform:scaleX(0.724);transform-origin:right;margin-left:-29.0px;">فروش صادراتی:</span></b></div>
<div class="c d" style="left:1747px;top:598px;width:41px;height:23px;background:#d5d5d5;color:#1d4f6a;text-align:center;padding-top:2px;"></div>
<div class="c d" style="left:1695px;top:598px;width:51px;height:23px;background:#d5d5d5;color:#1d4f6a;text-align:center;padding-top:2px;"></div>
<div class="c d" style="left:1637px;top:598px;width:57px;height:23px;background:#d5d5d5;color:#1d4f6a;text-align:center;padding-top:2px;"></div>
<div class="c d" style="left:1560px;top:598px;width:76px;height:23px;background:#d5d5d5;color:#1d4f6a;text-align:center;padding-top:2px;"></div>
<div class="c d" style="left:1462px;top:598px;width:97px;height:23px;background:#d5d5d5;color:#1d4f6a;text-align:center;padding-top:2px;"></div>
<div class="c d" style="left:1414px;top:598px;width:47px;height:23px;background:#d5d5d5;color:#1d4f6a;text-align:center;padding-top:2px;"></div>
<div class="c d" style="left:1360px;top:598px;width:53px;height:23px;background:#d5d5d5;color:#1d4f6a;text-align:center;padding-top:2px;"></div>
<div class="c d" style="left:1264px;top:598px;width:95px;height:23px;background:#d5d5d5;color:#1d4f6a;text-align:center;padding-top:2px;"></div>
<div class="c d" style="left:1212px;top:598px;width:51px;height:23px;background:#d5d5d5;color:#1d4f6a;text-align:center;padding-top:2px;"></div>
<div class="c d" style="left:1154px;top:598px;width:57px;height:23px;background:#d5d5d5;color:#1d4f6a;text-align:center;padding-top:2px;"></div>
<div class="c d" style="left:1077px;top:598px;width:76px;height:23px;background:#d5d5d5;color:#1d4f6a;text-align:center;padding-top:2px;"></div>
<div class="c d" style="left:979px;top:598px;width:97px;height:23px;background:#d5d5d5;color:#1d4f6a;text-align:center;padding-top:2px;"></div>
<div class="c d" style="left:926px;top:598px;width:52px;height:23px;background:#d5d5d5;color:#1d4f6a;text-align:center;padding-top:2px;"></div>
<div class="c d" style="left:869px;top:598px;width:56px;height:23px;background:#d5d5d5;color:#1d4f6a;text-align:center;padding-top:2px;"></div>
<div class="c d" style="left:792px;top:598px;width:76px;height:23px;background:#d5d5d5;color:#1d4f6a;text-align:center;padding-top:2px;"></div>
<div class="c d" style="left:696px;top:598px;width:95px;height:23px;background:#d5d5d5;color:#1d4f6a;text-align:center;padding-top:2px;"></div>
<div class="c d" style="left:643px;top:598px;width:52px;height:23px;background:#d5d5d5;color:#1d4f6a;text-align:center;padding-top:2px;"></div>
<div class="c d" style="left:585px;top:598px;width:57px;height:23px;background:#d5d5d5;color:#1d4f6a;text-align:center;padding-top:2px;"></div>
<div class="c d" style="left:508px;top:598px;width:76px;height:23px;background:#d5d5d5;color:#1d4f6a;text-align:center;padding-top:2px;"></div>
<div class="c d" style="left:410px;top:598px;width:97px;height:23px;background:#d5d5d5;color:#1d4f6a;text-align:center;padding-top:2px;"></div>
<div class="c d" style="left:356px;top:598px;width:53px;height:23px;background:#d5d5d5;color:#1d4f6a;text-align:center;padding-top:2px;"></div>
<div class="c d" style="left:298px;top:598px;width:57px;height:23px;background:#d5d5d5;color:#1d4f6a;text-align:center;padding-top:2px;"></div>
<div class="c d" style="left:220px;top:598px;width:77px;height:23px;background:#d5d5d5;color:#1d4f6a;text-align:center;padding-top:2px;"></div>
<div class="c d" style="left:122px;top:598px;width:97px;height:23px;background:#d5d5d5;color:#1d4f6a;text-align:center;padding-top:2px;"></div>
<div class="c d" style="left:36px;top:598px;width:85px;height:23px;background:#d5d5d5;color:#1d4f6a;text-align:center;padding-top:2px;"></div>
<div class="c d" style="left:1789px;top:622px;width:95px;height:41px;background:#fde19c;color:#1d4f6a;text-align:right;padding-right:1px;padding-top:2px;"><span class="t" style="font-size:13px;transform:scaleX(0.879);transform-origin:right;margin-left:-7.5px;">جمع فروش</span><br><span class="t" style="font-size:13px;transform:scaleX(0.848);transform-origin:right;margin-left:-7.0px;">صادراتی</span></div>
<div class="c d" style="left:1747px;top:622px;width:41px;height:41px;background:#fde19c;color:#1d4f6a;text-align:right;padding-right:3px;padding-top:2px;"></div>
<div class="c d" style="left:1695px;top:622px;width:51px;height:41px;background:#fde19c;color:#1d4f6a;text-align:center;padding-top:2px;"><span class="t n" style="font-size:13.5px;transform:scaleX(0.900);margin:0 -0.4px;"><i class="z"></i></span></div>
<div class="c d" style="left:1637px;top:622px;width:57px;height:41px;background:#fde19c;color:#1d4f6a;text-align:center;padding-top:2px;"><span class="t n" style="font-size:13.5px;transform:scaleX(0.900);margin:0 -0.4px;"><i class="z"></i></span></div>
<div class="c d" style="left:1560px;top:622px;width:76px;height:41px;background:#fde19c;color:#1d4f6a;text-align:center;padding-top:2px;"></div>
<div class="c d" style="left:1462px;top:622px;width:97px;height:41px;background:#fde19c;color:#1d4f6a;text-align:center;padding-top:2px;"><span class="t n" style="font-size:13.5px;transform:scaleX(0.900);margin:0 -0.4px;"><i class="z"></i></span></div>
<div class="c d" style="left:1414px;top:622px;width:47px;height:41px;background:#fde19c;color:#1d4f6a;text-align:center;padding-top:2px;"><span class="t n" style="font-size:13.5px;transform:scaleX(0.900);margin:0 -0.4px;"><i class="z"></i></span></div>
<div class="c d" style="left:1360px;top:622px;width:53px;height:41px;background:#fde19c;color:#1d4f6a;text-align:center;padding-top:2px;"><span class="t n" style="font-size:13.5px;transform:scaleX(0.900);margin:0 -0.4px;"><i class="z"></i></span></div>
<div class="c d" style="left:1264px;top:622px;width:95px;height:41px;background:#fde19c;color:#1d4f6a;text-align:center;padding-top:2px;"><span class="t n" style="font-size:13.5px;transform:scaleX(0.900);margin:0 -0.4px;"><i class="z"></i></span></div>
<div class="c d" style="left:1212px;top:622px;width:51px;height:41px;background:#fde19c;color:#1d4f6a;text-align:center;padding-top:2px;"><span class="t n" style="font-size:13.5px;transform:scaleX(0.900);margin:0 -0.4px;"><i class="z"></i></span></div>
<div class="c d" style="left:1154px;top:622px;width:57px;height:41px;background:#fde19c;color:#1d4f6a;text-align:center;padding-top:2px;"><span class="t n" style="font-size:13.5px;transform:scaleX(0.900);margin:0 -0.4px;"><i class="z"></i></span></div>
<div class="c d" style="left:1077px;top:622px;width:76px;height:41px;background:#fde19c;color:#1d4f6a;text-align:center;padding-top:2px;"></div>
<div class="c d" style="left:979px;top:622px;width:97px;height:41px;background:#fde19c;color:#1d4f6a;text-align:center;padding-top:2px;"><span class="t n" style="font-size:13.5px;transform:scaleX(0.900);margin:0 -0.4px;"><i class="z"></i></span></div>
<div class="c d" style="left:926px;top:622px;width:52px;height:41px;background:#fde19c;color:#1d4f6a;text-align:center;padding-top:2px;"><span class="t n" style="font-size:13.5px;transform:scaleX(0.900);margin:0 -0.4px;"><i class="z"></i></span></div>
<div class="c d" style="left:869px;top:622px;width:56px;height:41px;background:#fde19c;color:#1d4f6a;text-align:center;padding-top:2px;"><span class="t n" style="font-size:13.5px;transform:scaleX(0.900);margin:0 -0.4px;"><i class="z"></i></span></div>
<div class="c d" style="left:792px;top:622px;width:76px;height:41px;background:#fde19c;color:#1d4f6a;text-align:center;padding-top:2px;"></div>
<div class="c d" style="left:696px;top:622px;width:95px;height:41px;background:#fde19c;color:#1d4f6a;text-align:center;padding-top:2px;"><span class="t n" style="font-size:13.5px;transform:scaleX(0.900);margin:0 -0.4px;"><i class="z"></i></span></div>
<div class="c d" style="left:643px;top:622px;width:52px;height:41px;background:#fde19c;color:#1d4f6a;text-align:center;padding-top:2px;"><span class="t n" style="font-size:13.5px;transform:scaleX(0.900);margin:0 -0.4px;"><i class="z"></i></span></div>
<div class="c d" style="left:585px;top:622px;width:57px;height:41px;background:#fde19c;color:#1d4f6a;text-align:center;padding-top:2px;"><span class="t n" style="font-size:13.5px;transform:scaleX(0.900);margin:0 -0.4px;"><i class="z"></i></span></div>
<div class="c d" style="left:508px;top:622px;width:76px;height:41px;background:#fde19c;color:#1d4f6a;text-align:center;padding-top:2px;"></div>
<div class="c d" style="left:410px;top:622px;width:97px;height:41px;background:#fde19c;color:#1d4f6a;text-align:center;padding-top:2px;"><span class="t n" style="font-size:13.5px;transform:scaleX(0.900);margin:0 -0.4px;"><i class="z"></i></span></div>
<div class="c d" style="left:356px;top:622px;width:53px;height:41px;background:#fde19c;color:#1d4f6a;text-align:center;padding-top:2px;"><span class="t n" style="font-size:13.5px;transform:scaleX(0.900);margin:0 -0.4px;"><i class="z"></i></span></div>
<div class="c d" style="left:298px;top:622px;width:57px;height:41px;background:#fde19c;color:#1d4f6a;text-align:center;padding-top:2px;"><span class="t n" style="font-size:13.5px;transform:scaleX(0.900);margin:0 -0.4px;"><i class="z"></i></span></div>
<div class="c d" style="left:220px;top:622px;width:77px;height:41px;background:#fde19c;color:#1d4f6a;text-align:center;padding-top:2px;"></div>
<div class="c d" style="left:122px;top:622px;width:97px;height:41px;background:#fde19c;color:#1d4f6a;text-align:center;padding-top:2px;"><span class="t n" style="font-size:13.5px;transform:scaleX(0.900);margin:0 -0.4px;"><i class="z"></i></span></div>
<div class="c d" style="left:36px;top:622px;width:85px;height:41px;background:#fde19c;color:#1d4f6a;text-align:right;padding-right:2px;padding-top:2px;"></div>
<div class="c d" style="left:1789px;top:664px;width:95px;height:23px;background:#d5d5d5;color:#1d4f6a;text-align:right;padding-right:1px;padding-top:2px;"><b><span class="t" style="font-size:13px;font-weight:bold;transform:scaleX(0.769);transform-origin:right;margin-left:-27.0px;">درآمد ارائه خدمات:</span></b></div>
<div class="c d" style="left:1747px;top:664px;width:41px;height:23px;background:#d5d5d5;color:#1d4f6a;text-align:center;padding-top:2px;"></div>
<div class="c d" style="left:1695px;top:664px;width:51px;height:23px;background:#d5d5d5;color:#1d4f6a;text-align:center;padding-top:2px;"></div>
<div class="c d" style="left:1637px;top:664px;width:57px;height:23px;background:#d5d5d5;color:#1d4f6a;text-align:center;padding-top:2px;"></div>
<div class="c d" style="left:1560px;top:664px;width:76px;height:23px;background:#d5d5d5;color:#1d4f6a;text-align:center;padding-top:2px;"></div>
<div class="c d" style="left:1462px;top:664px;width:97px;height:23px;background:#d5d5d5;color:#1d4f6a;text-align:center;padding-top:2px;"></div>
<div class="c d" style="left:1414px;top:664px;width:47px;height:23px;background:#d5d5d5;color:#1d4f6a;text-align:center;padding-top:2px;"></div>
<div class="c d" style="left:1360px;top:664px;width:53px;height:23px;background:#d5d5d5;color:#1d4f6a;text-align:center;padding-top:2px;"></div>
<div class="c d" style="left:1264px;top:664px;width:95px;height:23px;background:#d5d5d5;color:#1d4f6a;text-align:center;padding-top:2px;"></div>
<div class="c d" style="left:1212px;top:664px;width:51px;height:23px;background:#d5d5d5;color:#1d4f6a;text-align:center;padding-top:2px;"></div>
<div class="c d" style="left:1154px;top:664px;width:57px;height:23px;background:#d5d5d5;color:#1d4f6a;text-align:center;padding-top:2px;"></div>
<div class="c d" style="left:1077px;top:664px;width:76px;height:23px;background:#d5d5d5;color:#1d4f6a;text-align:center;padding-top:2px;"></div>
<div class="c d" style="left:979px;top:664px;width:97px;height:23px;background:#d5d5d5;color:#1d4f6a;text-align:center;padding-top:2px;"></div>
<div class="c d" style="left:926px;top:664px;width:52px;height:23px;background:#d5d5d5;color:#1d4f6a;text-align:center;padding-top:2px;"></div>
<div class="c d" style="left:869px;top:664px;width:56px;height:23px;background:#d5d5d5;color:#1d4f6a;text-align:center;padding-top:2px;"></div>
<div class="c d" style="left:792px;top:664px;width:76px;height:23px;background:#d5d5d5;color:#1d4f6a;text-align:center;padding-top:2px;"></div>
<div class="c d" style="left:696px;top:664px;width:95px;height:23px;background:#d5d5d5;color:#1d4f6a;text-align:center;padding-top:2px;"></div>
<div class="c d" style="left:643px;top:664px;width:52px;height:23px;background:#d5d5d5;color:#1d4f6a;text-align:center;padding-top:2px;"></div>
<div class="c d" style="left:585px;top:664px;width:57px;height:23px;background:#d5d5d5;color:#1d4f6a;text-align:center;padding-top:2px;"></div>
<div class="c d" style="left:508px;top:664px;width:76px;height:23px;background:#d5d5d5;color:#1d4f6a;text-align:center;padding-top:2px;"></div>
<div class="c d" style="left:410px;top:664px;width:97px;height:23px;background:#d5d5d5;color:#1d4f6a;text-align:center;padding-top:2px;"></div>
<div class="c d" style="left:356px;top:664px;width:53px;height:23px;background:#d5d5d5;color:#1d4f6a;text-align:center;padding-top:2px;"></div>
<div class="c d" style="left:298px;top:664px;width:57px;height:23px;background:#d5d5d5;color:#1d4f6a;text-align:center;padding-top:2px;"></div>
<div class="c d" style="left:220px;top:664px;width:77px;height:23px;background:#d5d5d5;color:#1d4f6a;text-align:center;padding-top:2px;"></div>
<div class="c d" style="left:122px;top:664px;width:97px;height:23px;background:#d5d5d5;color:#1d4f6a;text-align:center;padding-top:2px;"></div>
<div class="c d" style="left:36px;top:664px;width:85px;height:23px;background:#d5d5d5;color:#1d4f6a;text-align:center;padding-top:2px;"></div>
<div class="c d" style="left:1789px;top:688px;width:95px;height:40px;background:#fde19c;color:#1d4f6a;text-align:right;padding-right:1px;padding-top:2px;"><span class="t" style="font-size:13px;transform:scaleX(0.860);transform-origin:right;margin-left:-12.0px;">جمع درآمد ارائه</span><br><span class="t" style="font-size:13px;transform:scaleX(0.895);transform-origin:right;margin-left:-4.0px;">خدمات</span></div>
<div class="c d" style="left:1747px;top:688px;width:41px;height:40px;background:#fde19c;color:#1d4f6a;text-align:right;padding-right:3px;padding-top:2px;"></div>
<div class="c d" style="left:1695px;top:688px;width:51px;height:40px;background:#fde19c;color:#1d4f6a;text-align:center;padding-top:2px;"><span class="t n" style="font-size:13.5px;transform:scaleX(0.900);margin:0 -0.4px;"><i class="z"></i></span></div>
<div class="c d" style="left:1637px;top:688px;width:57px;height:40px;background:#fde19c;color:#1d4f6a;text-align:center;padding-top:2px;"><span class="t n" style="font-size:13.5px;transform:scaleX(0.900);margin:0 -0.4px;"><i class="z"></i></span></div>
<div class="c d" style="left:1560px;top:688px;width:76px;height:40px;background:#fde19c;color:#1d4f6a;text-align:center;padding-top:2px;"></div>
<div class="c d" style="left:1462px;top:688px;width:97px;height:40px;background:#fde19c;color:#1d4f6a;text-align:center;padding-top:2px;"><span class="t n" style="font-size:13.5px;transform:scaleX(0.900);margin:0 -0.4px;"><i class="z"></i></span></div>
<div class="c d" style="left:1414px;top:688px;width:47px;height:40px;background:#fde19c;color:#1d4f6a;text-align:center;padding-top:2px;"><span class="t n" style="font-size:13.5px;transform:scaleX(0.900);margin:0 -0.4px;"><i class="z"></i></span></div>
<div class="c d" style="left:1360px;top:688px;width:53px;height:40px;background:#fde19c;color:#1d4f6a;text-align:center;padding-top:2px;"><span class="t n" style="font-size:13.5px;transform:scaleX(0.900);margin:0 -0.4px;"><i class="z"></i></span></div>
<div class="c d" style="left:1264px;top:688px;width:95px;height:40px;background:#fde19c;color:#1d4f6a;text-align:center;padding-top:2px;"><span class="t n" style="font-size:13.5px;transform:scaleX(0.900);margin:0 -0.4px;"><i class="z"></i></span></div>
<div class="c d" style="left:1212px;top:688px;width:51px;height:40px;background:#fde19c;color:#1d4f6a;text-align:center;padding-top:2px;"><span class="t n" style="font-size:13.5px;transform:scaleX(0.900);margin:0 -0.4px;"><i class="z"></i></span></div>
<div class="c d" style="left:1154px;top:688px;width:57px;height:40px;background:#fde19c;color:#1d4f6a;text-align:center;padding-top:2px;"><span class="t n" style="font-size:13.5px;transform:scaleX(0.900);margin:0 -0.4px;"><i class="z"></i></span></div>
<div class="c d" style="left:1077px;top:688px;width:76px;height:40px;background:#fde19c;color:#1d4f6a;text-align:center;padding-top:2px;"></div>
<div class="c d" style="left:979px;top:688px;width:97px;height:40px;background:#fde19c;color:#1d4f6a;text-align:center;padding-top:2px;"><span class="t n" style="font-size:13.5px;transform:scaleX(0.900);margin:0 -0.4px;"><i class="z"></i></span></div>
<div class="c d" style="left:926px;top:688px;width:52px;height:40px;background:#fde19c;color:#1d4f6a;text-align:center;padding-top:2px;"><span class="t n" style="font-size:13.5px;transform:scaleX(0.900);margin:0 -0.4px;"><i class="z"></i></span></div>
<div class="c d" style="left:869px;top:688px;width:56px;height:40px;background:#fde19c;color:#1d4f6a;text-align:center;padding-top:2px;"><span class="t n" style="font-size:13.5px;transform:scaleX(0.900);margin:0 -0.4px;"><i class="z"></i></span></div>
<div class="c d" style="left:792px;top:688px;width:76px;height:40px;background:#fde19c;color:#1d4f6a;text-align:center;padding-top:2px;"></div>
<div class="c d" style="left:696px;top:688px;width:95px;height:40px;background:#fde19c;color:#1d4f6a;text-align:center;padding-top:2px;"><span class="t n" style="font-size:13.5px;transform:scaleX(0.900);margin:0 -0.4px;"><i class="z"></i></span></div>
<div class="c d" style="left:643px;top:688px;width:52px;height:40px;background:#fde19c;color:#1d4f6a;text-align:center;padding-top:2px;"><span class="t n" style="font-size:13.5px;transform:scaleX(0.900);margin:0 -0.4px;"><i class="z"></i></span></div>
<div class="c d" style="left:585px;top:688px;width:57px;height:40px;background:#fde19c;color:#1d4f6a;text-align:center;padding-top:2px;"><span class="t n" style="font-size:13.5px;transform:scaleX(0.900);margin:0 -0.4px;"><i class="z"></i></span></div>
<div class="c d" style="left:508px;top:688px;width:76px;height:40px;background:#fde19c;color:#1d4f6a;text-align:center;padding-top:2px;"></div>
<div class="c d" style="left:410px;top:688px;width:97px;height:40px;background:#fde19c;color:#1d4f6a;text-align:center;padding-top:2px;"><span class="t n" style="font-size:13.5px;transform:scaleX(0.900);margin:0 -0.4px;"><i class="z"></i></span></div>
<div class="c d" style="left:356px;top:688px;width:53px;height:40px;background:#fde19c;color:#1d4f6a;text-align:center;padding-top:2px;"><span class="t n" style="font-size:13.5px;transform:scaleX(0.900);margin:0 -0.4px;"><i class="z"></i></span></div>
<div class="c d" style="left:298px;top:688px;width:57px;height:40px;background:#fde19c;color:#1d4f6a;text-align:center;padding-top:2px;"><span class="t n" style="font-size:13.5px;transform:scaleX(0.900);margin:0 -0.4px;"><i class="z"></i></span></div>
<div class="c d" style="left:220px;top:688px;width:77px;height:40px;background:#fde19c;color:#1d4f6a;text-align:center;padding-top:2px;"></div>
<div class="c d" style="left:122px;top:688px;width:97px;height:40px;background:#fde19c;color:#1d4f6a;text-align:center;padding-top:2px;"><span class="t n" style="font-size:13.5px;transform:scaleX(0.900);margin:0 -0.4px;"><i class="z"></i></span></div>
<div class="c d" style="left:36px;top:688px;width:85px;height:40px;background:#fde19c;color:#1d4f6a;text-align:right;padding-right:2px;padding-top:2px;"></div>
<div class="c d" style="left:1789px;top:729px;width:95px;height:23px;background:#d5d5d5;color:#1d4f6a;text-align:right;padding-right:1px;padding-top:2px;"><b><span class="t" style="font-size:13px;font-weight:bold;transform:scaleX(0.728);transform-origin:right;margin-left:-31.0px;">برگشت از فروش:</span></b></div>
<div class="c d" style="left:1747px;top:729px;width:41px;height:23px;background:#d5d5d5;color:#1d4f6a;text-align:center;padding-top:2px;"></div>
<div class="c d" style="left:1695px;top:729px;width:51px;height:23px;background:#d5d5d5;color:#1d4f6a;text-align:center;padding-top:2px;"></div>
<div class="c d" style="left:1637px;top:729px;width:57px;height:23px;background:#d5d5d5;color:#1d4f6a;text-align:center;padding-top:2px;"></div>
<div class="c d" style="left:1560px;top:729px;width:76px;height:23px;background:#d5d5d5;color:#1d4f6a;text-align:center;padding-top:2px;"></div>
<div class="c d" style="left:1462px;top:729px;width:97px;height:23px;background:#d5d5d5;color:#1d4f6a;text-align:center;padding-top:2px;"></div>
<div class="c d" style="left:1414px;top:729px;width:47px;height:23px;background:#d5d5d5;color:#1d4f6a;text-align:center;padding-top:2px;"></div>
<div class="c d" style="left:1360px;top:729px;width:53px;height:23px;background:#d5d5d5;color:#1d4f6a;text-align:center;padding-top:2px;"></div>
<div class="c d" style="left:1264px;top:729px;width:95px;height:23px;background:#d5d5d5;color:#1d4f6a;text-align:center;padding-top:2px;"></div>
<div class="c d" style="left:1212px;top:729px;width:51px;height:23px;background:#d5d5d5;color:#1d4f6a;text-align:center;padding-top:2px;"></div>
<div class="c d" style="left:1154px;top:729px;width:57px;height:23px;background:#d5d5d5;color:#1d4f6a;text-align:center;padding-top:2px;"></div>
<div class="c d" style="left:1077px;top:729px;width:76px;height:23px;background:#d5d5d5;color:#1d4f6a;text-align:center;padding-top:2px;"></div>
<div class="c d" style="left:979px;top:729px;width:97px;height:23px;background:#d5d5d5;color:#1d4f6a;text-align:center;padding-top:2px;"></div>
<div class="c d" style="left:926px;top:729px;width:52px;height:23px;background:#d5d5d5;color:#1d4f6a;text-align:center;padding-top:2px;"></div>
<div class="c d" style="left:869px;top:729px;width:56px;height:23px;background:#d5d5d5;color:#1d4f6a;text-align:center;padding-top:2px;"></div>
<div class="c d" style="left:792px;top:729px;width:76px;height:23px;background:#d5d5d5;color:#1d4f6a;text-align:center;padding-top:2px;"></div>
<div class="c d" style="left:696px;top:729px;width:95px;height:23px;background:#d5d5d5;color:#1d4f6a;text-align:center;padding-top:2px;"></div>
<div class="c d" style="left:643px;top:729px;width:52px;height:23px;background:#d5d5d5;color:#1d4f6a;text-align:center;padding-top:2px;"></div>
<div class="c d" style="left:585px;top:729px;width:57px;height:23px;background:#d5d5d5;color:#1d4f6a;text-align:center;padding-top:2px;"></div>
<div class="c d" style="left:508px;top:729px;width:76px;height:23px;background:#d5d5d5;color:#1d4f6a;text-align:center;padding-top:2px;"></div>
<div class="c d" style="left:410px;top:729px;width:97px;height:23px;background:#d5d5d5;color:#1d4f6a;text-align:center;padding-top:2px;"></div>
<div class="c d" style="left:356px;top:729px;width:53px;height:23px;background:#d5d5d5;color:#1d4f6a;text-align:center;padding-top:2px;"></div>
<div class="c d" style="left:298px;top:729px;width:57px;height:23px;background:#d5d5d5;color:#1d4f6a;text-align:center;padding-top:2px;"></div>
<div class="c d" style="left:220px;top:729px;width:77px;height:23px;background:#d5d5d5;color:#1d4f6a;text-align:center;padding-top:2px;"></div>
<div class="c d" style="left:122px;top:729px;width:97px;height:23px;background:#d5d5d5;color:#1d4f6a;text-align:center;padding-top:2px;"></div>
<div class="c d" style="left:36px;top:729px;width:85px;height:23px;background:#d5d5d5;color:#1d4f6a;text-align:center;padding-top:2px;"></div>
<div class="c d" style="left:1789px;top:753px;width:95px;height:23px;background:#eeeeee;color:#1d4f6a;text-align:right;padding-right:1px;padding-top:2px;"><span class="t" style="font-size:13px;transform:scaleX(0.880);transform-origin:right;margin-left:-9.0px;">الکترود قليايي</span></div>
<div class="c d" style="left:1747px;top:753px;width:41px;height:23px;background:#eeeeee;color:#1d4f6a;text-align:right;padding-right:3px;padding-top:2px;"><span class="t" style="font-size:13px;transform:scaleX(0.848);transform-origin:right;margin-left:-6.4px;">کیلوگرم</span></div>
<div class="c d" style="left:1695px;top:753px;width:51px;height:23px;background:#eeeeee;color:#1d4f6a;text-align:center;padding-top:2px;"></div>
<div class="c d" style="left:1637px;top:753px;width:57px;height:23px;background:#eeeeee;color:#1d4f6a;text-align:center;padding-top:2px;"><span style="color:#e2231a"><span class="t n" style="font-size:13.5px;transform:scaleX(0.900);margin:0 -1.3px;">(۳<i class="z"></i>)</span></span></div>
<div class="c d" style="left:1560px;top:753px;width:76px;height:23px;background:#fde19c;color:#1d4f6a;text-align:center;padding-top:2px;"><span class="t n" style="font-size:13.5px;transform:scaleX(0.900);margin:0 -3.2px;">۱,<i class="z"></i>۶۶,۶۶۷</span></div>
<div class="c d" style="left:1462px;top:753px;width:97px;height:23px;background:#eeeeee;color:#1d4f6a;text-align:center;padding-top:2px;"><span style="color:#e2231a"><span class="t n" style="font-size:13.5px;transform:scaleX(0.900);margin:0 -1.3px;">(۳۲)</span></span></div>
<div class="c d" style="left:1414px;top:753px;width:47px;height:23px;background:#eeeeee;color:#1d4f6a;text-align:center;padding-top:2px;"></div>
<div class="c d" style="left:1360px;top:753px;width:53px;height:23px;background:#eeeeee;color:#1d4f6a;text-align:center;padding-top:2px;"><span class="t n" style="font-size:13.5px;transform:scaleX(0.900);margin:0 -0.4px;"><i class="z"></i></span></div>
<div class="c d" style="left:1264px;top:753px;width:95px;height:23px;background:#eeeeee;color:#1d4f6a;text-align:center;padding-top:2px;"><span class="t n" style="font-size:13.5px;transform:scaleX(0.900);margin:0 -0.4px;"><i class="z"></i></span></div>
<div class="c d" style="left:1212px;top:753px;width:51px;height:23px;background:#eeeeee;color:#1d4f6a;text-align:center;padding-top:2px;"></div>
<div class="c d" style="left:1154px;top:753px;width:57px;height:23px;background:#fde19c;color:#1d4f6a;text-align:center;padding-top:2px;"><span style="color:#e2231a"><span class="t n" style="font-size:13.5px;transform:scaleX(0.900);margin:0 -1.3px;">(۳<i class="z"></i>)</span></span></div>
<div class="c d" style="left:1077px;top:753px;width:76px;height:23px;background:#fde19c;color:#1d4f6a;text-align:center;padding-top:2px;"><span class="t n" style="font-size:13.5px;transform:scaleX(0.900);margin:0 -3.2px;">۱,<i class="z"></i>۶۶,۶۶۷</span></div>
<div class="c d" style="left:979px;top:753px;width:97px;height:23px;background:#fde19c;color:#1d4f6a;text-align:center;padding-top:2px;"><span style="color:#e2231a"><span class="t n" style="font-size:13.5px;transform:scaleX(0.900);margin:0 -1.3px;">(۳۲)</span></span></div>
<div class="c d" style="left:926px;top:753px;width:52px;height:23px;background:#eeeeee;color:#1d4f6a;text-align:center;padding-top:2px;"></div>
<div class="c d" style="left:869px;top:753px;width:56px;height:23px;background:#eeeeee;color:#1d4f6a;text-align:center;padding-top:2px;"></div>
<div class="c d" style="left:792px;top:753px;width:76px;height:23px;background:#fde19c;color:#1d4f6a;text-align:center;padding-top:2px;"><span class="t n" style="font-size:13.5px;transform:scaleX(0.900);margin:0 -0.4px;"><i class="z"></i></span></div>
<div class="c d" style="left:696px;top:753px;width:95px;height:23px;background:#eeeeee;color:#1d4f6a;text-align:center;padding-top:2px;"></div>
<div class="c d" style="left:643px;top:753px;width:52px;height:23px;background:#fde19c;color:#1d4f6a;text-align:center;padding-top:2px;"></div>
<div class="c d" style="left:585px;top:753px;width:57px;height:23px;background:#fde19c;color:#1d4f6a;text-align:center;padding-top:2px;"><span style="color:#e2231a"><span class="t n" style="font-size:13.5px;transform:scaleX(0.900);margin:0 -1.3px;">(۳<i class="z"></i>)</span></span></div>
<div class="c d" style="left:508px;top:753px;width:76px;height:23px;background:#fde19c;color:#1d4f6a;text-align:center;padding-top:2px;"><span class="t n" style="font-size:13.5px;transform:scaleX(0.900);margin:0 -3.2px;">۱,<i class="z"></i>۶۶,۶۶۷</span></div>
<div class="c d" style="left:410px;top:753px;width:97px;height:23px;background:#fde19c;color:#1d4f6a;text-align:center;padding-top:2px;"><span style="color:#e2231a"><span class="t n" style="font-size:13.5px;transform:scaleX(0.900);margin:0 -1.3px;">(۳۲)</span></span></div>
<div class="c d" style="left:356px;top:753px;width:53px;height:23px;background:#eeeeee;color:#1d4f6a;text-align:center;padding-top:2px;"></div>
<div class="c d" style="left:298px;top:753px;width:57px;height:23px;background:#eeeeee;color:#1d4f6a;text-align:center;padding-top:2px;"><span class="t n" style="font-size:13.5px;transform:scaleX(0.900);margin:0 -0.4px;"><i class="z"></i></span></div>
<div class="c d" style="left:220px;top:753px;width:77px;height:23px;background:#fde19c;color:#1d4f6a;text-align:center;padding-top:2px;"><span class="t n" style="font-size:13.5px;transform:scaleX(0.900);margin:0 -0.4px;"><i class="z"></i></span></div>
<div class="c d" style="left:122px;top:753px;width:97px;height:23px;background:#eeeeee;color:#1d4f6a;text-align:center;padding-top:2px;"><span class="t n" style="font-size:13.5px;transform:scaleX(0.900);margin:0 -0.4px;"><i class="z"></i></span></div>
<div class="c d" style="left:36px;top:753px;width:85px;height:23px;background:#eeeeee;color:#1d4f6a;text-align:right;padding-right:2px;padding-top:2px;"><span class="t" style="font-size:13px;transform:scaleX(0.885);transform-origin:right;margin-left:-3.0px;">تولید</span></div>
<div class="c d" style="left:1789px;top:777px;width:95px;height:23px;background:#d2e4f5;color:#1d4f6a;text-align:right;padding-right:1px;padding-top:2px;"><span class="t" style="font-size:13px;transform:scaleX(0.854);transform-origin:right;margin-left:-12.4px;">الکترود سلولزي</span></div>
<div class="c d" style="left:1747px;top:777px;width:41px;height:23px;background:#d2e4f5;color:#1d4f6a;text-align:right;padding-right:3px;padding-top:2px;"><span class="t" style="font-size:13px;transform:scaleX(0.848);transform-origin:right;margin-left:-6.4px;">کیلوگرم</span></div>
<div class="c d" style="left:1695px;top:777px;width:51px;height:23px;background:#d2e4f5;color:#1d4f6a;text-align:center;padding-top:2px;"></div>
<div class="c d" style="left:1637px;top:777px;width:57px;height:23px;background:#d2e4f5;color:#1d4f6a;text-align:center;padding-top:2px;"><span style="color:#e2231a"><span class="t n" style="font-size:13.5px;transform:scaleX(0.900);margin:0 -2.3px;">(۲,۳۹۷)</span></span></div>
<div class="c d" style="left:1560px;top:777px;width:76px;height:23px;background:#fde19c;color:#1d4f6a;text-align:center;padding-top:2px;"><span class="t n" style="font-size:13.5px;transform:scaleX(0.900);margin:0 -3.2px;">۱,<i class="z"></i>۵۴,۶۵۲</span></div>
<div class="c d" style="left:1462px;top:777px;width:97px;height:23px;background:#d2e4f5;color:#1d4f6a;text-align:center;padding-top:2px;"><span style="color:#e2231a"><span class="t n" style="font-size:13.5px;transform:scaleX(0.900);margin:0 -2.3px;">(۲,۵۲۸)</span></span></div>
<div class="c d" style="left:1414px;top:777px;width:47px;height:23px;background:#d2e4f5;color:#1d4f6a;text-align:center;padding-top:2px;"></div>
<div class="c d" style="left:1360px;top:777px;width:53px;height:23px;background:#d2e4f5;color:#1d4f6a;text-align:center;padding-top:2px;"><span class="t n" style="font-size:13.5px;transform:scaleX(0.900);margin:0 -0.4px;"><i class="z"></i></span></div>
<div class="c d" style="left:1264px;top:777px;width:95px;height:23px;background:#d2e4f5;color:#1d4f6a;text-align:center;padding-top:2px;"><span class="t n" style="font-size:13.5px;transform:scaleX(0.900);margin:0 -0.4px;"><i class="z"></i></span></div>
<div class="c d" style="left:1212px;top:777px;width:51px;height:23px;background:#d2e4f5;color:#1d4f6a;text-align:center;padding-top:2px;"></div>
<div class="c d" style="left:1154px;top:777px;width:57px;height:23px;background:#fde19c;color:#1d4f6a;text-align:center;padding-top:2px;"><span style="color:#e2231a"><span class="t n" style="font-size:13.5px;transform:scaleX(0.900);margin:0 -2.3px;">(۲,۳۹۷)</span></span></div>
<div class="c d" style="left:1077px;top:777px;width:76px;height:23px;background:#fde19c;color:#1d4f6a;text-align:center;padding-top:2px;"><span class="t n" style="font-size:13.5px;transform:scaleX(0.900);margin:0 -3.2px;">۱,<i class="z"></i>۵۴,۶۵۲</span></div>
<div class="c d" style="left:979px;top:777px;width:97px;height:23px;background:#fde19c;color:#1d4f6a;text-align:center;padding-top:2px;"><span style="color:#e2231a"><span class="t n" style="font-size:13.5px;transform:scaleX(0.900);margin:0 -2.3px;">(۲,۵۲۸)</span></span></div>
<div class="c d" style="left:926px;top:777px;width:52px;height:23px;background:#d2e4f5;color:#1d4f6a;text-align:center;padding-top:2px;"></div>
<div class="c d" style="left:869px;top:777px;width:56px;height:23px;background:#d2e4f5;color:#1d4f6a;text-align:center;padding-top:2px;"></div>
<div class="c d" style="left:792px;top:777px;width:76px;height:23px;background:#fde19c;color:#1d4f6a;text-align:center;padding-top:2px;"><span class="t n" style="font-size:13.5px;transform:scaleX(0.900);margin:0 -0.4px;"><i class="z"></i></span></div>
<div class="c d" style="left:696px;top:777px;width:95px;height:23px;background:#d2e4f5;color:#1d4f6a;text-align:center;padding-top:2px;"></div>
<div class="c d" style="left:643px;top:777px;width:52px;height:23px;background:#fde19c;color:#1d4f6a;text-align:center;padding-top:2px;"></div>
<div class="c d" style="left:585px;top:777px;width:57px;height:23px;background:#fde19c;color:#1d4f6a;text-align:center;padding-top:2px;"><span style="color:#e2231a"><span class="t n" style="font-size:13.5px;transform:scaleX(0.900);margin:0 -2.3px;">(۲,۳۹۷)</span></span></div>
<div class="c d" style="left:508px;top:777px;width:76px;height:23px;background:#fde19c;color:#1d4f6a;text-align:center;padding-top:2px;"><span class="t n" style="font-size:13.5px;transform:scaleX(0.900);margin:0 -3.2px;">۱,<i class="z"></i>۵۴,۶۵۲</span></div>
<div class="c d" style="left:410px;top:777px;width:97px;height:23px;background:#fde19c;color:#1d4f6a;text-align:center;padding-top:2px;"><span style="color:#e2231a"><span class="t n" style="font-size:13.5px;transform:scaleX(0.900);margin:0 -2.3px;">(۲,۵۲۸)</span></span></div>
<div class="c d" style="left:356px;top:777px;width:53px;height:23px;background:#d2e4f5;color:#1d4f6a;text-align:center;padding-top:2px;"></div>
<div class="c d" style="left:298px;top:777px;width:57px;height:23px;background:#d2e4f5;color:#1d4f6a;text-align:center;padding-top:2px;"><span class="t n" style="font-size:13.5px;transform:scaleX(0.900);margin:0 -0.4px;"><i class="z"></i></span></div>
<div class="c d" style="left:220px;top:777px;width:77px;height:23px;background:#fde19c;color:#1d4f6a;text-align:center;padding-top:2px;"><span class="t n" style="font-size:13.5px;transform:scaleX(0.900);margin:0 -0.4px;"><i class="z"></i></span></div>
<div class="c d" style="left:122px;top:777px;width:97px;height:23px;background:#d2e4f5;color:#1d4f6a;text-align:center;padding-top:2px;"><span class="t n" style="font-size:13.5px;transform:scaleX(0.900);margin:0 -0.4px;"><i class="z"></i></span></div>
<div class="c d" style="left:36px;top:777px;width:85px;height:23px;background:#d2e4f5;color:#1d4f6a;text-align:right;padding-right:2px;padding-top:2px;"><span class="t" style="font-size:13px;transform:scaleX(0.885);transform-origin:right;margin-left:-3.0px;">تولید</span></div>
<div class="c d" style="left:1789px;top:801px;width:95px;height:24px;background:#eeeeee;color:#1d4f6a;text-align:right;padding-right:1px;padding-top:2px;"><span class="t" style="font-size:13px;transform:scaleX(0.877);transform-origin:right;margin-left:-10.0px;">الکترود روتايلي</span></div>
<div class="c d" style="left:1747px;top:801px;width:41px;height:24px;background:#eeeeee;color:#1d4f6a;text-align:right;padding-right:3px;padding-top:2px;"><span class="t" style="font-size:13px;transform:scaleX(0.848);transform-origin:right;margin-left:-6.4px;">کیلوگرم</span></div>
<div class="c d" style="left:1695px;top:801px;width:51px;height:24px;background:#eeeeee;color:#1d4f6a;text-align:center;padding-top:2px;"></div>
<div class="c d" style="left:1637px;top:801px;width:57px;height:24px;background:#eeeeee;color:#1d4f6a;text-align:center;padding-top:2px;"><span style="color:#e2231a"><span class="t n" style="font-size:13.5px;transform:scaleX(0.900);margin:0 -1.7px;">(۲۳<i class="z"></i>)</span></span></div>
<div class="c d" style="left:1560px;top:801px;width:76px;height:24px;background:#fde19c;color:#1d4f6a;text-align:center;padding-top:2px;"><span class="t n" style="font-size:13.5px;transform:scaleX(0.900);margin:0 -3.2px;">۱,۱۲۱,۷۳۹</span></div>
<div class="c d" style="left:1462px;top:801px;width:97px;height:24px;background:#eeeeee;color:#1d4f6a;text-align:center;padding-top:2px;"><span style="color:#e2231a"><span class="t n" style="font-size:13.5px;transform:scaleX(0.900);margin:0 -1.7px;">(۲۵۸)</span></span></div>
<div class="c d" style="left:1414px;top:801px;width:47px;height:24px;background:#eeeeee;color:#1d4f6a;text-align:center;padding-top:2px;"></div>
<div class="c d" style="left:1360px;top:801px;width:53px;height:24px;background:#eeeeee;color:#1d4f6a;text-align:center;padding-top:2px;"><span class="t n" style="font-size:13.5px;transform:scaleX(0.900);margin:0 -0.4px;"><i class="z"></i></span></div>
<div class="c d" style="left:1264px;top:801px;width:95px;height:24px;background:#eeeeee;color:#1d4f6a;text-align:center;padding-top:2px;"><span class="t n" style="font-size:13.5px;transform:scaleX(0.900);margin:0 -0.4px;"><i class="z"></i></span></div>
<div class="c d" style="left:1212px;top:801px;width:51px;height:24px;background:#eeeeee;color:#1d4f6a;text-align:center;padding-top:2px;"></div>
<div class="c d" style="left:1154px;top:801px;width:57px;height:24px;background:#fde19c;color:#1d4f6a;text-align:center;padding-top:2px;"><span style="color:#e2231a"><span class="t n" style="font-size:13.5px;transform:scaleX(0.900);margin:0 -1.7px;">(۲۳<i class="z"></i>)</span></span></div>
<div class="c d" style="left:1077px;top:801px;width:76px;height:24px;background:#fde19c;color:#1d4f6a;text-align:center;padding-top:2px;"><span class="t n" style="font-size:13.5px;transform:scaleX(0.900);margin:0 -3.2px;">۱,۱۲۱,۷۳۹</span></div>
<div class="c d" style="left:979px;top:801px;width:97px;height:24px;background:#fde19c;color:#1d4f6a;text-align:center;padding-top:2px;"><span style="color:#e2231a"><span class="t n" style="font-size:13.5px;transform:scaleX(0.900);margin:0 -1.7px;">(۲۵۸)</span></span></div>
<div class="c d" style="left:926px;top:801px;width:52px;height:24px;background:#eeeeee;color:#1d4f6a;text-align:center;padding-top:2px;"></div>
<div class="c d" style="left:869px;top:801px;width:56px;height:24px;background:#eeeeee;color:#1d4f6a;text-align:center;padding-top:2px;"></div>
<div class="c d" style="left:792px;top:801px;width:76px;height:24px;background:#fde19c;color:#1d4f6a;text-align:center;padding-top:2px;"><span class="t n" style="font-size:13.5px;transform:scaleX(0.900);margin:0 -0.4px;"><i class="z"></i></span></div>
<div class="c d" style="left:696px;top:801px;width:95px;height:24px;background:#eeeeee;color:#1d4f6a;text-align:center;padding-top:2px;"></div>
<div class="c d" style="left:643px;top:801px;width:52px;height:24px;background:#fde19c;color:#1d4f6a;text-align:center;padding-top:2px;"></div>
<div class="c d" style="left:585px;top:801px;width:57px;height:24px;background:#fde19c;color:#1d4f6a;text-align:center;padding-top:2px;"><span style="color:#e2231a"><span class="t n" style="font-size:13.5px;transform:scaleX(0.900);margin:0 -1.7px;">(۲۳<i class="z"></i>)</span></span></div>
<div class="c d" style="left:508px;top:801px;width:76px;height:24px;background:#fde19c;color:#1d4f6a;text-align:center;padding-top:2px;"><span class="t n" style="font-size:13.5px;transform:scaleX(0.900);margin:0 -3.2px;">۱,۱۲۱,۷۳۹</span></div>
<div class="c d" style="left:410px;top:801px;width:97px;height:24px;background:#fde19c;color:#1d4f6a;text-align:center;padding-top:2px;"><span style="color:#e2231a"><span class="t n" style="font-size:13.5px;transform:scaleX(0.900);margin:0 -1.7px;">(۲۵۸)</span></span></div>
<div class="c d" style="left:356px;top:801px;width:53px;height:24px;background:#eeeeee;color:#1d4f6a;text-align:center;padding-top:2px;"></div>
<div class="c d" style="left:298px;top:801px;width:57px;height:24px;background:#eeeeee;color:#1d4f6a;text-align:center;padding-top:2px;"><span class="t n" style="font-size:13.5px;transform:scaleX(0.900);margin:0 -0.4px;"><i class="z"></i></span></div>
<div class="c d" style="left:220px;top:801px;width:77px;height:24px;background:#fde19c;color:#1d4f6a;text-align:center;padding-top:2px;"><span class="t n" style="font-size:13.5px;transform:scaleX(0.900);margin:0 -0.4px;"><i class="z"></i></span></div>
<div class="c d" style="left:122px;top:801px;width:97px;height:24px;background:#eeeeee;color:#1d4f6a;text-align:center;padding-top:2px;"><span class="t n" style="font-size:13.5px;transform:scaleX(0.900);margin:0 -0.4px;"><i class="z"></i></span></div>
<div class="c d" style="left:36px;top:801px;width:85px;height:24px;background:#eeeeee;color:#1d4f6a;text-align:right;padding-right:2px;padding-top:2px;"><span class="t" style="font-size:13px;transform:scaleX(0.885);transform-origin:right;margin-left:-3.0px;">تولید</span></div>
<div class="c d" style="left:1789px;top:826px;width:95px;height:40px;background:#fde19c;color:#1d4f6a;text-align:right;padding-right:1px;padding-top:2px;"><span class="t" style="font-size:13px;transform:scaleX(0.843);transform-origin:right;margin-left:-13.0px;">جمع برگشت از</span><br><span class="t" style="font-size:13px;transform:scaleX(0.857);transform-origin:right;margin-left:-5.0px;">فروش</span></div>
<div class="c d" style="left:1747px;top:826px;width:41px;height:40px;background:#fde19c;color:#1d4f6a;text-align:right;padding-right:3px;padding-top:2px;"></div>
<div class="c d" style="left:1695px;top:826px;width:51px;height:40px;background:#fde19c;color:#1d4f6a;text-align:center;padding-top:2px;"></div>
<div class="c d" style="left:1637px;top:826px;width:57px;height:40px;background:#fde19c;color:#1d4f6a;text-align:center;padding-top:2px;"><span style="color:#e2231a"><span class="t n" style="font-size:13.5px;transform:scaleX(0.900);margin:0 -2.3px;">(۲,۶۵۷)</span></span></div>
<div class="c d" style="left:1560px;top:826px;width:76px;height:40px;background:#fde19c;color:#1d4f6a;text-align:center;padding-top:2px;"></div>
<div class="c d" style="left:1462px;top:826px;width:97px;height:40px;background:#fde19c;color:#1d4f6a;text-align:center;padding-top:2px;"><span style="color:#e2231a"><span class="t n" style="font-size:13.5px;transform:scaleX(0.900);margin:0 -2.3px;">(۲,۸۱۸)</span></span></div>
<div class="c d" style="left:1414px;top:826px;width:47px;height:40px;background:#fde19c;color:#1d4f6a;text-align:center;padding-top:2px;"></div>
<div class="c d" style="left:1360px;top:826px;width:53px;height:40px;background:#fde19c;color:#1d4f6a;text-align:center;padding-top:2px;"><span class="t n" style="font-size:13.5px;transform:scaleX(0.900);margin:0 -0.4px;"><i class="z"></i></span></div>
<div class="c d" style="left:1264px;top:826px;width:95px;height:40px;background:#fde19c;color:#1d4f6a;text-align:center;padding-top:2px;"><span class="t n" style="font-size:13.5px;transform:scaleX(0.900);margin:0 -0.4px;"><i class="z"></i></span></div>
<div class="c d" style="left:1212px;top:826px;width:51px;height:40px;background:#fde19c;color:#1d4f6a;text-align:center;padding-top:2px;"></div>
<div class="c d" style="left:1154px;top:826px;width:57px;height:40px;background:#fde19c;color:#1d4f6a;text-align:center;padding-top:2px;"><span style="color:#e2231a"><span class="t n" style="font-size:13.5px;transform:scaleX(0.900);margin:0 -2.3px;">(۲,۶۵۷)</span></span></div>
<div class="c d" style="left:1077px;top:826px;width:76px;height:40px;background:#fde19c;color:#1d4f6a;text-align:center;padding-top:2px;"></div>
<div class="c d" style="left:979px;top:826px;width:97px;height:40px;background:#fde19c;color:#1d4f6a;text-align:center;padding-top:2px;"><span style="color:#e2231a"><span class="t n" style="font-size:13.5px;transform:scaleX(0.900);margin:0 -2.3px;">(۲,۸۱۸)</span></span></div>
<div class="c d" style="left:926px;top:826px;width:52px;height:40px;background:#fde19c;color:#1d4f6a;text-align:center;padding-top:2px;"></div>
<div class="c d" style="left:869px;top:826px;width:56px;height:40px;background:#fde19c;color:#1d4f6a;text-align:center;padding-top:2px;"><span class="t n" style="font-size:13.5px;transform:scaleX(0.900);margin:0 -0.4px;"><i class="z"></i></span></div>
<div class="c d" style="left:792px;top:826px;width:76px;height:40px;background:#fde19c;color:#1d4f6a;text-align:center;padding-top:2px;"></div>
<div class="c d" style="left:696px;top:826px;width:95px;height:40px;background:#fde19c;color:#1d4f6a;text-align:center;padding-top:2px;"><span class="t n" style="font-size:13.5px;transform:scaleX(0.900);margin:0 -0.4px;"><i class="z"></i></span></div>
<div class="c d" style="left:643px;top:826px;width:52px;height:40px;background:#fde19c;color:#1d4f6a;text-align:center;padding-top:2px;"></div>
<div class="c d" style="left:585px;top:826px;width:57px;height:40px;background:#fde19c;color:#1d4f6a;text-align:center;padding-top:2px;"><span style="color:#e2231a"><span class="t n" style="font-size:13.5px;transform:scaleX(0.900);margin:0 -2.3px;">(۲,۶۵۷)</span></span></div>
<div class="c d" style="left:508px;top:826px;width:76px;height:40px;background:#fde19c;color:#1d4f6a;text-align:center;padding-top:2px;"></div>
<div class="c d" style="left:410px;top:826px;width:97px;height:40px;background:#fde19c;color:#1d4f6a;text-align:center;padding-top:2px;"><span style="color:#e2231a"><span class="t n" style="font-size:13.5px;transform:scaleX(0.900);margin:0 -2.3px;">(۲,۸۱۸)</span></span></div>
<div class="c d" style="left:356px;top:826px;width:53px;height:40px;background:#fde19c;color:#1d4f6a;text-align:center;padding-top:2px;"></div>
<div class="c d" style="left:298px;top:826px;width:57px;height:40px;background:#fde19c;color:#1d4f6a;text-align:center;padding-top:2px;"><span class="t n" style="font-size:13.5px;transform:scaleX(0.900);margin:0 -0.4px;"><i class="z"></i></span></div>
<div class="c d" style="left:220px;top:826px;width:77px;height:40px;background:#fde19c;color:#1d4f6a;text-align:center;padding-top:2px;"></div>
<div class="c d" style="left:122px;top:826px;width:97px;height:40px;background:#fde19c;color:#1d4f6a;text-align:center;padding-top:2px;"><span class="t n" style="font-size:13.5px;transform:scaleX(0.900);margin:0 -0.4px;"><i class="z"></i></span></div>
<div class="c d" style="left:36px;top:826px;width:85px;height:40px;background:#fde19c;color:#1d4f6a;text-align:right;padding-right:2px;padding-top:2px;"></div>
<div class="c d" style="left:1789px;top:867px;width:95px;height:23px;background:#d2e4f5;color:#1d4f6a;text-align:right;padding-right:1px;padding-top:2px;"><span class="t" style="font-size:13px;transform:scaleX(0.924);transform-origin:right;margin-left:-3.5px;">تخفیفات</span></div>
<div class="c d" style="left:1747px;top:867px;width:41px;height:23px;background:#d2e4f5;color:#1d4f6a;text-align:right;padding-right:3px;padding-top:2px;"></div>
<div class="c d" style="left:1695px;top:867px;width:51px;height:23px;background:#d5d5d5;color:#1d4f6a;text-align:center;padding-top:2px;"></div>
<div class="c d" style="left:1637px;top:867px;width:57px;height:23px;background:#d5d5d5;color:#1d4f6a;text-align:center;padding-top:2px;"></div>
<div class="c d" style="left:1560px;top:867px;width:76px;height:23px;background:#d5d5d5;color:#1d4f6a;text-align:center;padding-top:2px;"></div>
<div class="c d" style="left:1462px;top:867px;width:97px;height:23px;background:#d2e4f5;color:#1d4f6a;text-align:center;padding-top:2px;"><span style="color:#e2231a"><span class="t n" style="font-size:13.5px;transform:scaleX(0.900);margin:0 -0.9px;">(۶)</span></span></div>
<div class="c d" style="left:1414px;top:867px;width:47px;height:23px;background:#d5d5d5;color:#1d4f6a;text-align:center;padding-top:2px;"></div>
<div class="c d" style="left:1360px;top:867px;width:53px;height:23px;background:#d5d5d5;color:#1d4f6a;text-align:center;padding-top:2px;"></div>
<div class="c d" style="left:1264px;top:867px;width:95px;height:23px;background:#d2e4f5;color:#1d4f6a;text-align:center;padding-top:2px;"><span class="t n" style="font-size:13.5px;transform:scaleX(0.900);margin:0 -0.4px;"><i class="z"></i></span></div>
<div class="c d" style="left:1212px;top:867px;width:51px;height:23px;background:#d5d5d5;color:#1d4f6a;text-align:center;padding-top:2px;"></div>
<div class="c d" style="left:1154px;top:867px;width:57px;height:23px;background:#d5d5d5;color:#1d4f6a;text-align:center;padding-top:2px;"></div>
<div class="c d" style="left:1077px;top:867px;width:76px;height:23px;background:#d5d5d5;color:#1d4f6a;text-align:center;padding-top:2px;"></div>
<div class="c d" style="left:979px;top:867px;width:97px;height:23px;background:#d2e4f5;color:#1d4f6a;text-align:center;padding-top:2px;"><span class="t n" style="font-size:13.5px;transform:scaleX(0.900);margin:0 -0.4px;"><i class="z"></i></span></div>
<div class="c d" style="left:926px;top:867px;width:52px;height:23px;background:#d5d5d5;color:#1d4f6a;text-align:center;padding-top:2px;"></div>
<div class="c d" style="left:869px;top:867px;width:56px;height:23px;background:#d5d5d5;color:#1d4f6a;text-align:center;padding-top:2px;"></div>
<div class="c d" style="left:792px;top:867px;width:76px;height:23px;background:#d5d5d5;color:#1d4f6a;text-align:center;padding-top:2px;"></div>
<div class="c d" style="left:696px;top:867px;width:95px;height:23px;background:#d2e4f5;color:#1d4f6a;text-align:center;padding-top:2px;"><span class="t n" style="font-size:13.5px;transform:scaleX(0.900);margin:0 -0.4px;"><i class="z"></i></span></div>
<div class="c d" style="left:643px;top:867px;width:52px;height:23px;background:#d5d5d5;color:#1d4f6a;text-align:center;padding-top:2px;"></div>
<div class="c d" style="left:585px;top:867px;width:57px;height:23px;background:#d5d5d5;color:#1d4f6a;text-align:center;padding-top:2px;"></div>
<div class="c d" style="left:508px;top:867px;width:76px;height:23px;background:#d5d5d5;color:#1d4f6a;text-align:center;padding-top:2px;"></div>
<div class="c d" style="left:410px;top:867px;width:97px;height:23px;background:#d2e4f5;color:#1d4f6a;text-align:center;padding-top:2px;"><span class="t n" style="font-size:13.5px;transform:scaleX(0.900);margin:0 -0.4px;"><i class="z"></i></span></div>
<div class="c d" style="left:356px;top:867px;width:53px;height:23px;background:#d5d5d5;color:#1d4f6a;text-align:center;padding-top:2px;"></div>
<div class="c d" style="left:298px;top:867px;width:57px;height:23px;background:#d5d5d5;color:#1d4f6a;text-align:center;padding-top:2px;"></div>
<div class="c d" style="left:220px;top:867px;width:77px;height:23px;background:#d5d5d5;color:#1d4f6a;text-align:center;padding-top:2px;"></div>
<div class="c d" style="left:122px;top:867px;width:97px;height:23px;background:#d2e4f5;color:#1d4f6a;text-align:center;padding-top:2px;"><span class="t n" style="font-size:13.5px;transform:scaleX(0.900);margin:0 -0.4px;"><i class="z"></i></span></div>
<div class="c d" style="left:36px;top:867px;width:85px;height:23px;background:#d2e4f5;color:#1d4f6a;text-align:right;padding-right:2px;padding-top:2px;"></div>
<div class="c d" style="left:1789px;top:891px;width:95px;height:23px;background:#fde19c;color:#1d4f6a;text-align:right;padding-right:1px;padding-top:2px;"><span class="t" style="font-size:13px;transform:scaleX(0.913);transform-origin:right;margin-left:-2.0px;">جمع</span></div>
<div class="c d" style="left:1747px;top:891px;width:41px;height:23px;background:#fde19c;color:#1d4f6a;text-align:right;padding-right:3px;padding-top:2px;"></div>
<div class="c d" style="left:1695px;top:891px;width:51px;height:23px;background:#fde19c;color:#1d4f6a;text-align:center;padding-top:2px;"></div>
<div class="c d" style="left:1637px;top:891px;width:57px;height:23px;background:#fde19c;color:#1d4f6a;text-align:center;padding-top:2px;"></div>
<div class="c d" style="left:1560px;top:891px;width:76px;height:23px;background:#fde19c;color:#1d4f6a;text-align:center;padding-top:2px;"></div>
<div class="c d" style="left:1462px;top:891px;width:97px;height:23px;background:#fde19c;color:#1d4f6a;text-align:center;padding-top:2px;"><span class="t n" style="font-size:13.5px;transform:scaleX(0.900);margin:0 -2.2px;">۴۲,۳۹۴</span></div>
<div class="c d" style="left:1414px;top:891px;width:47px;height:23px;background:#fde19c;color:#1d4f6a;text-align:center;padding-top:2px;"></div>
<div class="c d" style="left:1360px;top:891px;width:53px;height:23px;background:#fde19c;color:#1d4f6a;text-align:center;padding-top:2px;"></div>
<div class="c d" style="left:1264px;top:891px;width:95px;height:23px;background:#fde19c;color:#1d4f6a;text-align:center;padding-top:2px;"><span class="t n" style="font-size:13.5px;transform:scaleX(0.900);margin:0 -0.4px;"><i class="z"></i></span></div>
<div class="c d" style="left:1212px;top:891px;width:51px;height:23px;background:#fde19c;color:#1d4f6a;text-align:center;padding-top:2px;"></div>
<div class="c d" style="left:1154px;top:891px;width:57px;height:23px;background:#fde19c;color:#1d4f6a;text-align:center;padding-top:2px;"></div>
<div class="c d" style="left:1077px;top:891px;width:76px;height:23px;background:#fde19c;color:#1d4f6a;text-align:center;padding-top:2px;"></div>
<div class="c d" style="left:979px;top:891px;width:97px;height:23px;background:#fde19c;color:#1d4f6a;text-align:center;padding-top:2px;"><span class="t n" style="font-size:13.5px;transform:scaleX(0.900);margin:0 -2.2px;">۴۲,۴<i class="z"></i><i class="z"></i></span></div>
<div class="c d" style="left:926px;top:891px;width:52px;height:23px;background:#fde19c;color:#1d4f6a;text-align:center;padding-top:2px;"></div>
<div class="c d" style="left:869px;top:891px;width:56px;height:23px;background:#fde19c;color:#1d4f6a;text-align:center;padding-top:2px;"></div>
<div class="c d" style="left:792px;top:891px;width:76px;height:23px;background:#fde19c;color:#1d4f6a;text-align:center;padding-top:2px;"></div>
<div class="c d" style="left:696px;top:891px;width:95px;height:23px;background:#fde19c;color:#1d4f6a;text-align:center;padding-top:2px;"><span class="t n" style="font-size:13.5px;transform:scaleX(0.900);margin:0 -2.2px;">۱۱,۵۵۳</span></div>
<div class="c d" style="left:643px;top:891px;width:52px;height:23px;background:#fde19c;color:#1d4f6a;text-align:center;padding-top:2px;"></div>
<div class="c d" style="left:585px;top:891px;width:57px;height:23px;background:#fde19c;color:#1d4f6a;text-align:center;padding-top:2px;"></div>
<div class="c d" style="left:508px;top:891px;width:76px;height:23px;background:#fde19c;color:#1d4f6a;text-align:center;padding-top:2px;"></div>
<div class="c d" style="left:410px;top:891px;width:97px;height:23px;background:#fde19c;color:#1d4f6a;text-align:center;padding-top:2px;"><span class="t n" style="font-size:13.5px;transform:scaleX(0.900);margin:0 -2.2px;">۵۳,۹۵۳</span></div>
<div class="c d" style="left:356px;top:891px;width:53px;height:23px;background:#fde19c;color:#1d4f6a;text-align:center;padding-top:2px;"></div>
<div class="c d" style="left:298px;top:891px;width:57px;height:23px;background:#fde19c;color:#1d4f6a;text-align:center;padding-top:2px;"></div>
<div class="c d" style="left:220px;top:891px;width:77px;height:23px;background:#fde19c;color:#1d4f6a;text-align:center;padding-top:2px;"></div>
<div class="c d" style="left:122px;top:891px;width:97px;height:23px;background:#fde19c;color:#1d4f6a;text-align:center;padding-top:2px;"><span class="t n" style="font-size:13.5px;transform:scaleX(0.900);margin:0 -2.2px;">۶۷,۹۷۴</span></div>
<div class="c d" style="left:36px;top:891px;width:85px;height:23px;background:#fde19c;color:#1d4f6a;text-align:right;padding-right:2px;padding-top:2px;"></div>
<div style="left:35px;top:925px;width:1850px;height:27px;background:#0597cc;"></div>
<div style="left:500px;top:927px;width:1380px;height:22px;line-height:22px;font-size:12px;font-weight:bold;color:#fff;text-align:right;white-space:nowrap"><span class="t" style="font-size:14px;font-weight:bold;transform:scaleX(0.709);transform-origin:right;margin-left:-30.0px;">خرید مواد اولیه</span></div>
<div style="left:35px;top:957px;width:1850px;height:49px;background:#7ac8e6;"></div>
<div class="c" style="left:1752px;top:958px;width:132px;height:48px;background:#0597cc;color:#fff;text-align:center;font-weight:bold;padding-top:1.5px;line-height:17.300px;z-index:2;"><span class="t" style="font-size:13.5px;font-weight:bold;transform:scaleX(0.712);margin:0 -4.7px;">شرح</span></div>
<div class="c" style="left:1719px;top:958px;width:32px;height:48px;background:#0597cc;color:#fff;text-align:center;font-weight:bold;padding-top:1.5px;line-height:17.300px;z-index:2;"><span class="t" style="font-size:13.5px;font-weight:bold;transform:scaleX(0.719);margin:0 -4.5px;">واحد</span></div>
<div class="c" style="left:1477px;top:958px;width:241px;height:23px;background:#0597cc;color:#fff;text-align:center;font-weight:bold;padding-top:1.5px;line-height:17.300px;z-index:2;"><span class="t" style="font-size:13.5px;font-weight:bold;transform:scaleX(0.718);margin:0 -37.5px;">از ابتدای سال مالی تا تاریخ <span class="t n">۱۴<i class="z"></i>۴/<i class="z"></i>۶/۳۱</span></span></div>
<div class="c" style="left:1673px;top:982px;width:45px;height:24px;background:#0597cc;color:#fff;text-align:center;font-weight:bold;padding-top:1.5px;line-height:17.300px;z-index:2;"><span class="t" style="font-size:13.5px;font-weight:bold;transform:scaleX(0.675);margin:0 -6.5px;">مقدار</span></div>
<div class="c" style="left:1589px;top:982px;width:83px;height:24px;background:#0597cc;color:#fff;text-align:center;font-weight:bold;padding-top:1.5px;line-height:17.300px;z-index:2;"><span class="t" style="font-size:13.5px;font-weight:bold;transform:scaleX(0.721);margin:0 -9.5px;">نرخ (ریال)</span></div>
<div class="c" style="left:1477px;top:982px;width:111px;height:24px;background:#0597cc;color:#fff;text-align:center;font-weight:bold;padding-top:1.5px;line-height:17.300px;z-index:2;"><span class="t" style="font-size:13.5px;font-weight:bold;transform:scaleX(0.709);margin:0 -18.5px;">مبلغ (میلیون ریال)</span></div>
<div class="c" style="left:1259px;top:958px;width:217px;height:23px;background:#0597cc;color:#fff;text-align:center;font-weight:bold;padding-top:1.5px;line-height:17.300px;z-index:2;"><span class="t" style="font-size:13.5px;font-weight:bold;transform:scaleX(0.703);margin:0 -8.8px;">اصلاحات</span></div>
<div class="c" style="left:1439px;top:982px;width:37px;height:24px;background:#0597cc;color:#fff;text-align:center;font-weight:bold;padding-top:1.5px;line-height:17.300px;z-index:2;"><span class="t" style="font-size:13.5px;font-weight:bold;transform:scaleX(0.675);margin:0 -6.5px;">مقدار</span></div>
<div class="c" style="left:1375px;top:982px;width:63px;height:24px;background:#0597cc;color:#fff;text-align:center;font-weight:bold;padding-top:1.5px;line-height:17.300px;z-index:2;"><span class="t" style="font-size:13.5px;font-weight:bold;transform:scaleX(0.721);margin:0 -9.5px;">نرخ (ریال)</span></div>
<div class="c" style="left:1259px;top:982px;width:115px;height:24px;background:#0597cc;color:#fff;text-align:center;font-weight:bold;padding-top:1.5px;line-height:17.300px;z-index:2;"><span class="t" style="font-size:13.5px;font-weight:bold;transform:scaleX(0.710);margin:0 -19.0px;">مبلغ ( میلیون ریال)</span></div>
<div class="c" style="left:956px;top:958px;width:302px;height:23px;background:#0597cc;color:#fff;text-align:center;font-weight:bold;padding-top:1.5px;line-height:17.300px;z-index:2;"><span class="t" style="font-size:13.5px;font-weight:bold;transform:scaleX(0.717);margin:0 -49.5px;">ازابتدای سال مالی تا تاریخ <span class="t n">۱۴<i class="z"></i>۴/<i class="z"></i>۶/۳۱</span> (اصلاح شده)</span></div>
<div class="c" style="left:1202px;top:982px;width:56px;height:24px;background:#0597cc;color:#fff;text-align:center;font-weight:bold;padding-top:1.5px;line-height:17.300px;z-index:2;"><span class="t" style="font-size:13.5px;font-weight:bold;transform:scaleX(0.675);margin:0 -6.5px;">مقدار</span></div>
<div class="c" style="left:1096px;top:982px;width:105px;height:24px;background:#0597cc;color:#fff;text-align:center;font-weight:bold;padding-top:1.5px;line-height:17.300px;z-index:2;"><span class="t" style="font-size:13.5px;font-weight:bold;transform:scaleX(0.721);margin:0 -9.5px;">نرخ (ریال)</span></div>
<div class="c" style="left:956px;top:982px;width:139px;height:24px;background:#0597cc;color:#fff;text-align:center;font-weight:bold;padding-top:1.5px;line-height:17.300px;z-index:2;"><span class="t" style="font-size:13.5px;font-weight:bold;transform:scaleX(0.709);margin:0 -18.5px;">مبلغ (میلیون ریال)</span></div>
<div class="c" style="left:708px;top:958px;width:247px;height:23px;background:#0597cc;color:#fff;text-align:center;font-weight:bold;padding-top:1.5px;line-height:17.300px;z-index:2;"><span class="t" style="font-size:13.5px;font-weight:bold;transform:scaleX(0.736);margin:0 -36.5px;">خرید دوره یک ماهه منتهی به <span class="t n">۱۴<i class="z"></i>۴/<i class="z"></i>۷/۳<i class="z"></i></span></span></div>
<div class="c" style="left:918px;top:982px;width:37px;height:24px;background:#0597cc;color:#fff;text-align:center;font-weight:bold;padding-top:1.5px;line-height:17.300px;z-index:2;"><span class="t" style="font-size:13.5px;font-weight:bold;transform:scaleX(0.675);margin:0 -6.5px;">مقدار</span></div>
<div class="c" style="left:821px;top:982px;width:96px;height:24px;background:#0597cc;color:#fff;text-align:center;font-weight:bold;padding-top:1.5px;line-height:17.300px;z-index:2;"><span class="t" style="font-size:13.5px;font-weight:bold;transform:scaleX(0.721);margin:0 -9.5px;">نرخ (ریال)</span></div>
<div class="c" style="left:708px;top:982px;width:112px;height:24px;background:#0597cc;color:#fff;text-align:center;font-weight:bold;padding-top:1.5px;line-height:17.300px;z-index:2;"><span class="t" style="font-size:13.5px;font-weight:bold;transform:scaleX(0.709);margin:0 -18.5px;">مبلغ (میلیون ریال)</span></div>
<div class="c" style="left:284px;top:958px;width:423px;height:23px;background:#0597cc;color:#fff;text-align:center;font-weight:bold;padding-top:1.5px;line-height:17.300px;z-index:2;"><span class="t" style="font-size:13.5px;font-weight:bold;transform:scaleX(0.710);margin:0 -72.0px;">مواد اولیه خریداری شده از ابتدای دوره تا پایان دوره منتهی به <span class="t n">۱۴<i class="z"></i>۴/<i class="z"></i>۷/۳<i class="z"></i></span></span></div>
<div class="c" style="left:632px;top:982px;width:75px;height:24px;background:#0597cc;color:#fff;text-align:center;font-weight:bold;padding-top:1.5px;line-height:17.300px;z-index:2;"><span class="t" style="font-size:13.5px;font-weight:bold;transform:scaleX(0.675);margin:0 -6.5px;">مقدار</span></div>
<div class="c" style="left:471px;top:982px;width:160px;height:24px;background:#0597cc;color:#fff;text-align:center;font-weight:bold;padding-top:1.5px;line-height:17.300px;z-index:2;"><span class="t" style="font-size:13.5px;font-weight:bold;transform:scaleX(0.721);margin:0 -9.5px;">نرخ (ریال)</span></div>
<div class="c" style="left:284px;top:982px;width:186px;height:24px;background:#0597cc;color:#fff;text-align:center;font-weight:bold;padding-top:1.5px;line-height:17.300px;z-index:2;"><span class="t" style="font-size:13.5px;font-weight:bold;transform:scaleX(0.709);margin:0 -18.5px;">مبلغ (میلیون ریال)</span></div>
<div class="c" style="left:36px;top:958px;width:247px;height:23px;background:#0597cc;color:#fff;text-align:center;font-weight:bold;padding-top:1.5px;line-height:17.300px;z-index:2;"><span class="t" style="font-size:13.5px;font-weight:bold;transform:scaleX(0.733);margin:0 -35.5px;">از ابتدای سال مالی تا تاریخ <span class="t n">۱۴<i class="z"></i>۳/<i class="z"></i>۷/۳<i class="z"></i></span></span></div>
<div class="c" style="left:247px;top:982px;width:36px;height:24px;background:#0597cc;color:#fff;text-align:center;font-weight:bold;padding-top:1.5px;line-height:17.300px;z-index:2;"><span class="t" style="font-size:13.5px;font-weight:bold;transform:scaleX(0.675);margin:0 -6.5px;">مقدار</span></div>
<div class="c" style="left:149px;top:982px;width:97px;height:24px;background:#0597cc;color:#fff;text-align:center;font-weight:bold;padding-top:1.5px;line-height:17.300px;z-index:2;"><span class="t" style="font-size:13.5px;font-weight:bold;transform:scaleX(0.721);margin:0 -9.5px;">نرخ (ریال)</span></div>
<div class="c" style="left:36px;top:982px;width:112px;height:24px;background:#0597cc;color:#fff;text-align:center;font-weight:bold;padding-top:1.5px;line-height:17.300px;z-index:2;"><span class="t" style="font-size:13.5px;font-weight:bold;transform:scaleX(0.709);margin:0 -18.5px;">مبلغ (میلیون ریال)</span></div>
<div style="left:35px;top:1006px;width:1850px;height:74px;background:#b9bfc4;"></div>
<div class="c d" style="left:1752px;top:1006px;width:132px;height:24px;background:#d5d5d5;color:#1d4f6a;text-align:right;padding-right:1px;padding-top:2px;"><b><span class="t" style="font-size:13px;font-weight:bold;transform:scaleX(0.757);transform-origin:right;margin-left:-25.0px;">مواد اولیه داخلی</span></b></div>
<div class="c d" style="left:1719px;top:1006px;width:32px;height:24px;background:#d5d5d5;color:#1d4f6a;text-align:center;padding-top:2px;"></div>
<div class="c d" style="left:1673px;top:1006px;width:45px;height:24px;background:#d5d5d5;color:#1d4f6a;text-align:center;padding-top:2px;"></div>
<div class="c d" style="left:1589px;top:1006px;width:83px;height:24px;background:#d5d5d5;color:#1d4f6a;text-align:center;padding-top:2px;"></div>
<div class="c d" style="left:1477px;top:1006px;width:111px;height:24px;background:#d5d5d5;color:#1d4f6a;text-align:center;padding-top:2px;"></div>
<div class="c d" style="left:1439px;top:1006px;width:37px;height:24px;background:#d5d5d5;color:#1d4f6a;text-align:center;padding-top:2px;"></div>
<div class="c d" style="left:1375px;top:1006px;width:63px;height:24px;background:#d5d5d5;color:#1d4f6a;text-align:center;padding-top:2px;"></div>
<div class="c d" style="left:1259px;top:1006px;width:115px;height:24px;background:#d5d5d5;color:#1d4f6a;text-align:center;padding-top:2px;"></div>
<div class="c d" style="left:1202px;top:1006px;width:56px;height:24px;background:#d5d5d5;color:#1d4f6a;text-align:center;padding-top:2px;"></div>
<div class="c d" style="left:1096px;top:1006px;width:105px;height:24px;background:#d5d5d5;color:#1d4f6a;text-align:center;padding-top:2px;"></div>
<div class="c d" style="left:956px;top:1006px;width:139px;height:24px;background:#d5d5d5;color:#1d4f6a;text-align:center;padding-top:2px;"></div>
<div class="c d" style="left:918px;top:1006px;width:37px;height:24px;background:#d5d5d5;color:#1d4f6a;text-align:center;padding-top:2px;"></div>
<div class="c d" style="left:821px;top:1006px;width:96px;height:24px;background:#d5d5d5;color:#1d4f6a;text-align:center;padding-top:2px;"></div>
<div class="c d" style="left:708px;top:1006px;width:112px;height:24px;background:#d5d5d5;color:#1d4f6a;text-align:center;padding-top:2px;"></div>
<div class="c d" style="left:632px;top:1006px;width:75px;height:24px;background:#d5d5d5;color:#1d4f6a;text-align:center;padding-top:2px;"></div>
<div class="c d" style="left:471px;top:1006px;width:160px;height:24px;background:#d5d5d5;color:#1d4f6a;text-align:center;padding-top:2px;"></div>
<div class="c d" style="left:284px;top:1006px;width:186px;height:24px;background:#d5d5d5;color:#1d4f6a;text-align:center;padding-top:2px;"></div>
<div class="c d" style="left:247px;top:1006px;width:36px;height:24px;background:#d5d5d5;color:#1d4f6a;text-align:center;padding-top:2px;"></div>
<div class="c d" style="left:149px;top:1006px;width:97px;height:24px;background:#d5d5d5;color:#1d4f6a;text-align:center;padding-top:2px;"></div>
<div class="c d" style="left:36px;top:1006px;width:112px;height:24px;background:#d5d5d5;color:#1d4f6a;text-align:center;padding-top:2px;"></div>
<div class="c d" style="left:1752px;top:1031px;width:132px;height:23px;background:#d2e4f5;color:#1d4f6a;text-align:right;padding-right:1px;padding-top:2px;"><span class="t" style="font-size:13px;transform:scaleX(0.846);transform-origin:right;margin-left:-10.0px;">انواع پودرها</span></div>
<div class="c d" style="left:1719px;top:1031px;width:32px;height:23px;background:#d2e4f5;color:#1d4f6a;text-align:right;padding-right:3px;padding-top:2px;"><span class="t" style="font-size:13px;transform:scaleX(0.893);transform-origin:right;margin-left:-1.5px;">تن</span></div>
<div class="c d" style="left:1673px;top:1031px;width:45px;height:23px;background:#d2e4f5;color:#1d4f6a;text-align:center;padding-top:2px;"><span class="t n" style="font-size:13.5px;transform:scaleX(0.900);margin:0 -1.8px;">۶,۳۸۵</span></div>
<div class="c d" style="left:1589px;top:1031px;width:83px;height:23px;background:#fde19c;color:#1d4f6a;text-align:center;padding-top:2px;"><span class="t n" style="font-size:13.5px;transform:scaleX(0.900);margin:0 -3.2px;">۱,۶۲۴,۴۳۲</span></div>
<div class="c d" style="left:1477px;top:1031px;width:111px;height:23px;background:#d2e4f5;color:#1d4f6a;text-align:center;padding-top:2px;"><span class="t n" style="font-size:13.5px;transform:scaleX(0.900);margin:0 -2.2px;">۱<i class="z"></i>,۳۷۲</span></div>
<div class="c d" style="left:1439px;top:1031px;width:37px;height:23px;background:#d2e4f5;color:#1d4f6a;text-align:center;padding-top:2px;"><span class="t n" style="font-size:13.5px;transform:scaleX(0.900);margin:0 -0.4px;"><i class="z"></i></span></div>
<div class="c d" style="left:1375px;top:1031px;width:63px;height:23px;background:#fde19c;color:#1d4f6a;text-align:center;padding-top:2px;"><span class="t n" style="font-size:13.5px;transform:scaleX(0.900);margin:0 -0.4px;"><i class="z"></i></span></div>
<div class="c d" style="left:1259px;top:1031px;width:115px;height:23px;background:#d2e4f5;color:#1d4f6a;text-align:center;padding-top:2px;"><span class="t n" style="font-size:13.5px;transform:scaleX(0.900);margin:0 -0.4px;"><i class="z"></i></span></div>
<div class="c d" style="left:1202px;top:1031px;width:56px;height:23px;background:#fde19c;color:#1d4f6a;text-align:center;padding-top:2px;"><span class="t n" style="font-size:13.5px;transform:scaleX(0.900);margin:0 -1.8px;">۶,۳۸۵</span></div>
<div class="c d" style="left:1096px;top:1031px;width:105px;height:23px;background:#fde19c;color:#1d4f6a;text-align:center;padding-top:2px;"><span class="t n" style="font-size:13.5px;transform:scaleX(0.900);margin:0 -3.2px;">۱,۶۲۴,۴۳۲</span></div>
<div class="c d" style="left:956px;top:1031px;width:139px;height:23px;background:#fde19c;color:#1d4f6a;text-align:center;padding-top:2px;"><span class="t n" style="font-size:13.5px;transform:scaleX(0.900);margin:0 -2.2px;">۱<i class="z"></i>,۳۷۲</span></div>
<div class="c d" style="left:918px;top:1031px;width:37px;height:23px;background:#d2e4f5;color:#1d4f6a;text-align:center;padding-top:2px;"><span class="t n" style="font-size:13.5px;transform:scaleX(0.900);margin:0 -0.4px;">۳</span></div>
<div class="c d" style="left:821px;top:1031px;width:96px;height:23px;background:#d2e4f5;color:#1d4f6a;text-align:center;padding-top:2px;"><span class="t n" style="font-size:13.5px;transform:scaleX(0.900);margin:0 -4.0px;">۹۶<i class="z"></i>,<i class="z"></i><i class="z"></i><i class="z"></i>,<i class="z"></i><i class="z"></i><i class="z"></i></span></div>
<div class="c d" style="left:708px;top:1031px;width:112px;height:23px;background:#d2e4f5;color:#1d4f6a;text-align:center;padding-top:2px;"><span class="t n" style="font-size:13.5px;transform:scaleX(0.900);margin:0 -1.8px;">۲,۸۸<i class="z"></i></span></div>
<div class="c d" style="left:632px;top:1031px;width:75px;height:23px;background:#fde19c;color:#1d4f6a;text-align:center;padding-top:2px;"><span class="t n" style="font-size:13.5px;transform:scaleX(0.900);margin:0 -1.8px;">۶,۳۸۸</span></div>
<div class="c d" style="left:471px;top:1031px;width:160px;height:23px;background:#fde19c;color:#1d4f6a;text-align:center;padding-top:2px;"><span class="t n" style="font-size:13.5px;transform:scaleX(0.900);margin:0 -3.2px;">۲,<i class="z"></i>۷۴,۵۱۵</span></div>
<div class="c d" style="left:284px;top:1031px;width:186px;height:23px;background:#fde19c;color:#1d4f6a;text-align:center;padding-top:2px;"><span class="t n" style="font-size:13.5px;transform:scaleX(0.900);margin:0 -2.2px;">۱۳,۲۵۲</span></div>
<div class="c d" style="left:247px;top:1031px;width:36px;height:23px;background:#d2e4f5;color:#1d4f6a;text-align:center;padding-top:2px;"><span class="t n" style="font-size:13.5px;transform:scaleX(0.900);margin:0 -0.4px;">۸</span></div>
<div class="c d" style="left:149px;top:1031px;width:97px;height:23px;background:#fde19c;color:#1d4f6a;text-align:center;padding-top:2px;"><span class="t n" style="font-size:13.5px;transform:scaleX(0.900);margin:0 -4.6px;">۱,۴۷۳,۷۵<i class="z"></i>,<i class="z"></i><i class="z"></i><i class="z"></i></span></div>
<div class="c d" style="left:36px;top:1031px;width:112px;height:23px;background:#d2e4f5;color:#1d4f6a;text-align:center;padding-top:2px;"><span class="t n" style="font-size:13.5px;transform:scaleX(0.900);margin:0 -2.2px;">۱۱,۷۹<i class="z"></i></span></div>
<div class="c d" style="left:1752px;top:1055px;width:132px;height:23px;background:#eeeeee;color:#1d4f6a;text-align:right;padding-right:1px;padding-top:2px;"><span class="t" style="font-size:13px;transform:scaleX(0.853);transform-origin:right;margin-left:-5.0px;">مفتول</span></div>
<div class="c d" style="left:1719px;top:1055px;width:32px;height:23px;background:#eeeeee;color:#1d4f6a;text-align:right;padding-right:3px;padding-top:2px;"><span class="t" style="font-size:13px;transform:scaleX(0.893);transform-origin:right;margin-left:-1.5px;">تن</span></div>
<div class="c d" style="left:1673px;top:1055px;width:45px;height:23px;background:#eeeeee;color:#1d4f6a;text-align:center;padding-top:2px;"><span class="t n" style="font-size:13.5px;transform:scaleX(0.900);margin:0 -0.8px;">۲۱</span></div>
<div class="c d" style="left:1589px;top:1055px;width:83px;height:23px;background:#fde19c;color:#1d4f6a;text-align:center;padding-top:2px;"><span class="t n" style="font-size:13.5px;transform:scaleX(0.900);margin:0 -4.0px;">۴<i class="z"></i>۲,۱۹<i class="z"></i>,۴۷۶</span></div>
<div class="c d" style="left:1477px;top:1055px;width:111px;height:23px;background:#eeeeee;color:#1d4f6a;text-align:center;padding-top:2px;"><span class="t n" style="font-size:13.5px;transform:scaleX(0.900);margin:0 -1.8px;">۸,۴۴۶</span></div>
<div class="c d" style="left:1439px;top:1055px;width:37px;height:23px;background:#eeeeee;color:#1d4f6a;text-align:center;padding-top:2px;"><span class="t n" style="font-size:13.5px;transform:scaleX(0.900);margin:0 -0.4px;"><i class="z"></i></span></div>
<div class="c d" style="left:1375px;top:1055px;width:63px;height:23px;background:#fde19c;color:#1d4f6a;text-align:center;padding-top:2px;"><span class="t n" style="font-size:13.5px;transform:scaleX(0.900);margin:0 -0.4px;"><i class="z"></i></span></div>
<div class="c d" style="left:1259px;top:1055px;width:115px;height:23px;background:#eeeeee;color:#1d4f6a;text-align:center;padding-top:2px;"><span class="t n" style="font-size:13.5px;transform:scaleX(0.900);margin:0 -0.4px;"><i class="z"></i></span></div>
<div class="c d" style="left:1202px;top:1055px;width:56px;height:23px;background:#fde19c;color:#1d4f6a;text-align:center;padding-top:2px;"><span class="t n" style="font-size:13.5px;transform:scaleX(0.900);margin:0 -0.8px;">۲۱</span></div>
<div class="c d" style="left:1096px;top:1055px;width:105px;height:23px;background:#fde19c;color:#1d4f6a;text-align:center;padding-top:2px;"><span class="t n" style="font-size:13.5px;transform:scaleX(0.900);margin:0 -4.0px;">۴<i class="z"></i>۲,۱۹<i class="z"></i>,۴۷۶</span></div>
<div class="c d" style="left:956px;top:1055px;width:139px;height:23px;background:#fde19c;color:#1d4f6a;text-align:center;padding-top:2px;"><span class="t n" style="font-size:13.5px;transform:scaleX(0.900);margin:0 -1.8px;">۸,۴۴۶</span></div>
<div class="c d" style="left:918px;top:1055px;width:37px;height:23px;background:#eeeeee;color:#1d4f6a;text-align:center;padding-top:2px;"><span class="t n" style="font-size:13.5px;transform:scaleX(0.900);margin:0 -0.8px;">۲۲</span></div>
<div class="c d" style="left:821px;top:1055px;width:96px;height:23px;background:#eeeeee;color:#1d4f6a;text-align:center;padding-top:2px;"><span class="t n" style="font-size:13.5px;transform:scaleX(0.900);margin:0 -4.0px;">۴۱۶,۹<i class="z"></i>۹,<i class="z"></i>۹۱</span></div>
<div class="c d" style="left:708px;top:1055px;width:112px;height:23px;background:#eeeeee;color:#1d4f6a;text-align:center;padding-top:2px;"><span class="t n" style="font-size:13.5px;transform:scaleX(0.900);margin:0 -1.8px;">۹,۱۷۲</span></div>
<div class="c d" style="left:632px;top:1055px;width:75px;height:23px;background:#fde19c;color:#1d4f6a;text-align:center;padding-top:2px;"><span class="t n" style="font-size:13.5px;transform:scaleX(0.900);margin:0 -0.8px;">۴۳</span></div>
<div class="c d" style="left:471px;top:1055px;width:160px;height:23px;background:#fde19c;color:#1d4f6a;text-align:center;padding-top:2px;"><span class="t n" style="font-size:13.5px;transform:scaleX(0.900);margin:0 -4.0px;">۴<i class="z"></i>۹,۷۲<i class="z"></i>,۹۳<i class="z"></i></span></div>
<div class="c d" style="left:284px;top:1055px;width:186px;height:23px;background:#fde19c;color:#1d4f6a;text-align:center;padding-top:2px;"><span class="t n" style="font-size:13.5px;transform:scaleX(0.900);margin:0 -2.2px;">۱۷,۶۱۸</span></div>
<div class="c d" style="left:247px;top:1055px;width:36px;height:23px;background:#eeeeee;color:#1d4f6a;text-align:center;padding-top:2px;"><span class="t n" style="font-size:13.5px;transform:scaleX(0.900);margin:0 -0.8px;">۵۵</span></div>
<div class="c d" style="left:149px;top:1055px;width:97px;height:23px;background:#fde19c;color:#1d4f6a;text-align:center;padding-top:2px;"><span class="t n" style="font-size:13.5px;transform:scaleX(0.900);margin:0 -4.0px;">۲۹<i class="z"></i>,۵۴۵,۴۵۵</span></div>
<div class="c d" style="left:36px;top:1055px;width:112px;height:23px;background:#eeeeee;color:#1d4f6a;text-align:center;padding-top:2px;"><span class="t n" style="font-size:13.5px;transform:scaleX(0.900);margin:0 -2.2px;">۱۵,۹۸<i class="z"></i></span></div>
<div class="c d" style="left:1752px;top:1079px;width:132px;height:24px;background:#d2e4f5;color:#1d4f6a;text-align:right;padding-right:1px;padding-top:2px;"><span class="t" style="font-size:13px;transform:scaleX(0.900);transform-origin:right;margin-left:-0.0px;"></span></div>
<div class="c d" style="left:1719px;top:1079px;width:32px;height:24px;background:#d2e4f5;color:#1d4f6a;text-align:right;padding-right:3px;padding-top:2px;"><span class="t" style="font-size:13px;transform:scaleX(0.900);transform-origin:right;margin-left:-0.0px;"></span></div>
<div class="c d" style="left:1673px;top:1079px;width:45px;height:24px;background:#d2e4f5;color:#1d4f6a;text-align:center;padding-top:2px;"></div>
<div class="c d" style="left:1589px;top:1079px;width:83px;height:24px;background:#fde19c;color:#1d4f6a;text-align:center;padding-top:2px;"></div>
<div class="c d" style="left:1477px;top:1079px;width:111px;height:24px;background:#d2e4f5;color:#1d4f6a;text-align:center;padding-top:2px;"></div>
<div class="c d" style="left:1439px;top:1079px;width:37px;height:24px;background:#d2e4f5;color:#1d4f6a;text-align:center;padding-top:2px;"></div>
<div class="c d" style="left:1375px;top:1079px;width:63px;height:24px;background:#fde19c;color:#1d4f6a;text-align:center;padding-top:2px;"></div>
<div class="c d" style="left:1259px;top:1079px;width:115px;height:24px;background:#d2e4f5;color:#1d4f6a;text-align:center;padding-top:2px;"></div>
<div class="c d" style="left:1202px;top:1079px;width:56px;height:24px;background:#fde19c;color:#1d4f6a;text-align:center;padding-top:2px;"></div>
<div class="c d" style="left:1096px;top:1079px;width:105px;height:24px;background:#fde19c;color:#1d4f6a;text-align:center;padding-top:2px;"></div>
<div class="c d" style="left:956px;top:1079px;width:139px;height:24px;background:#fde19c;color:#1d4f6a;text-align:center;padding-top:2px;"></div>
<div class="c d" style="left:918px;top:1079px;width:37px;height:24px;background:#d2e4f5;color:#1d4f6a;text-align:center;padding-top:2px;"></div>
<div class="c d" style="left:821px;top:1079px;width:96px;height:24px;background:#d2e4f5;color:#1d4f6a;text-align:center;padding-top:2px;"></div>
<div class="c d" style="left:708px;top:1079px;width:112px;height:24px;background:#d2e4f5;color:#1d4f6a;text-align:center;padding-top:2px;"></div>
<div class="c d" style="left:632px;top:1079px;width:75px;height:24px;background:#fde19c;color:#1d4f6a;text-align:center;padding-top:2px;"></div>
<div class="c d" style="left:471px;top:1079px;width:160px;height:24px;background:#fde19c;color:#1d4f6a;text-align:center;padding-top:2px;"></div>
<div class="c d" style="left:284px;top:1079px;width:186px;height:24px;background:#fde19c;color:#1d4f6a;text-align:center;padding-top:2px;"></div>
<div class="c d" style="left:247px;top:1079px;width:36px;height:24px;background:#d2e4f5;color:#1d4f6a;text-align:center;padding-top:2px;"></div>
<div class="c d" style="left:149px;top:1079px;width:97px;height:24px;background:#fde19c;color:#1d4f6a;text-align:center;padding-top:2px;"></div>
<div class="c d" style="left:36px;top:1079px;width:112px;height:24px;background:#d2e4f5;color:#1d4f6a;text-align:center;padding-top:2px;"></div>
<div style="left:554px;top:484px;width:800px;height:110px;line-height:110px;text-align:center;direction:ltr;font-size:96px;font-weight:bold;color:#707070;-webkit-text-stroke:3px #707070;opacity:0.075;z-index:1;transform:rotate(-45deg);white-space:nowrap">@Codal360.ir</div>
</body></html>
